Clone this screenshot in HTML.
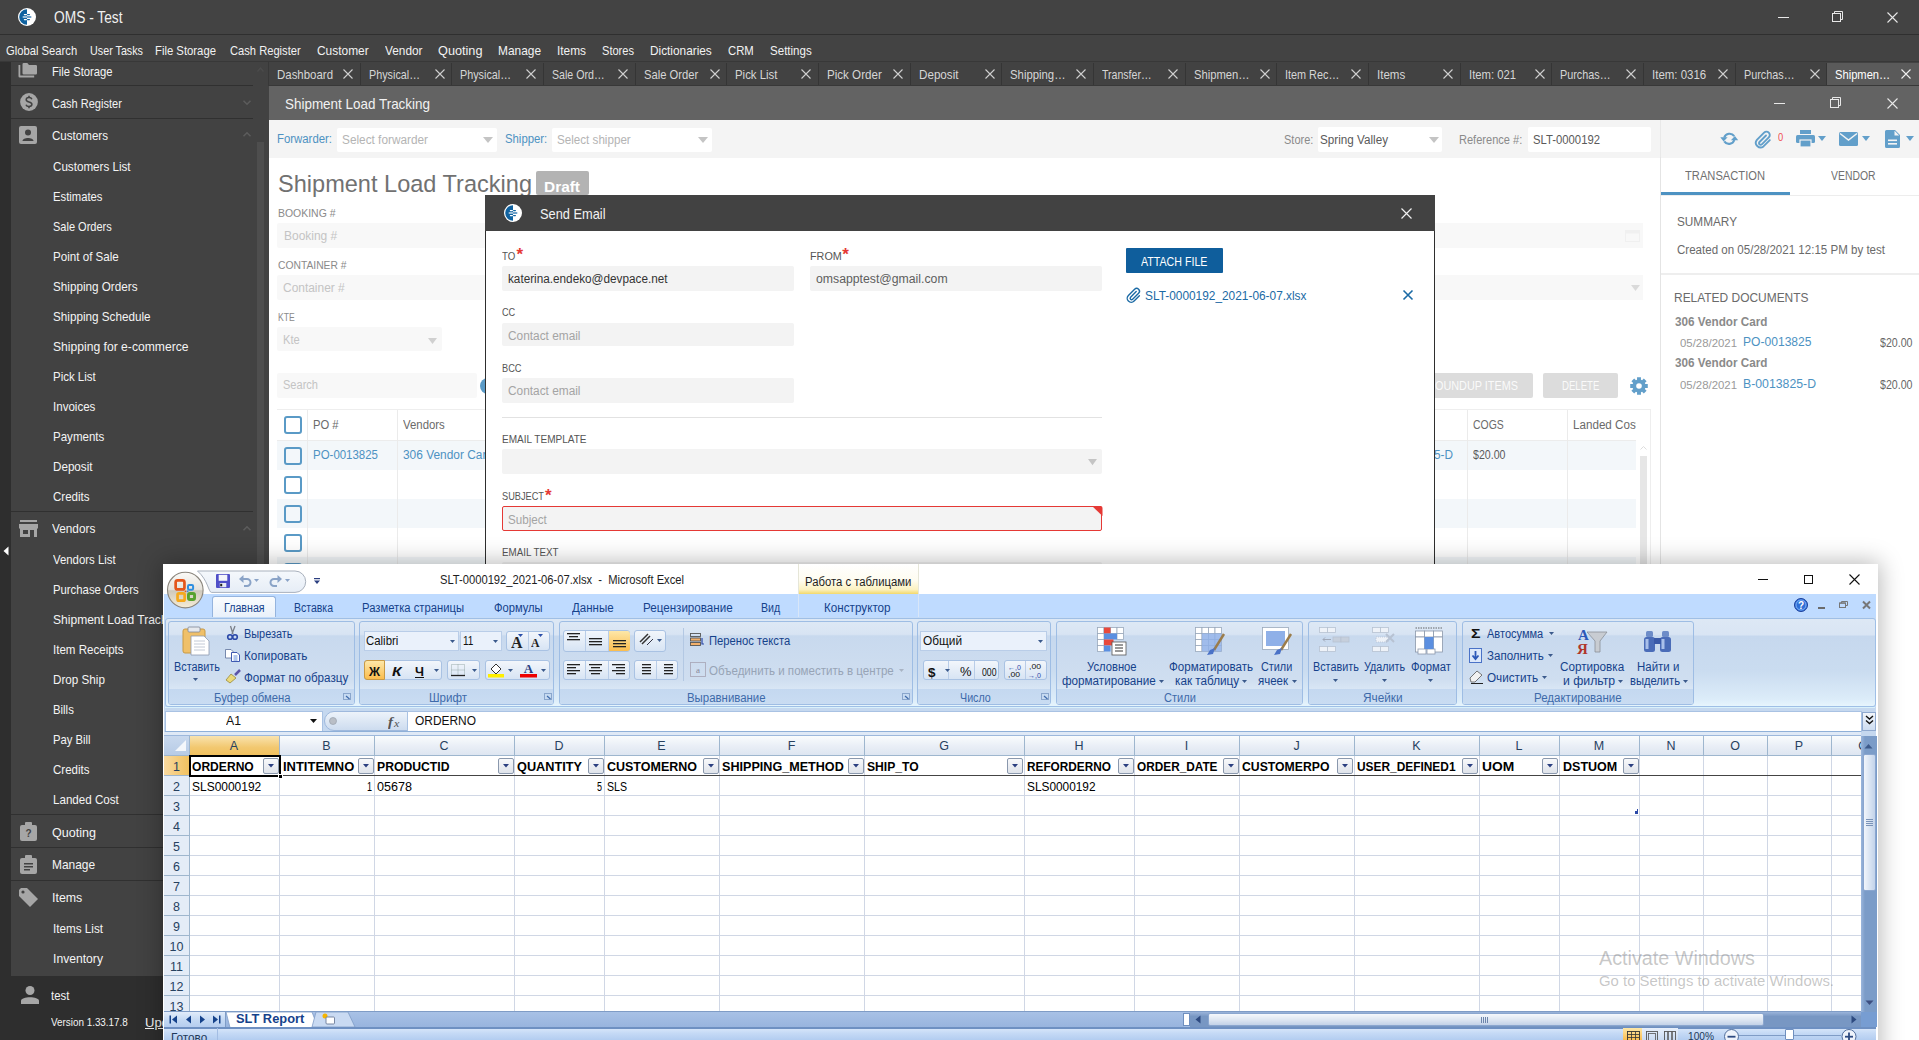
<!DOCTYPE html>
<html><head><meta charset="utf-8"><style>
*{margin:0;padding:0;box-sizing:border-box}
html,body{width:1919px;height:1040px;overflow:hidden;background:#434343;font-family:"Liberation Sans",sans-serif;position:relative}
.a{position:absolute}
.t{position:absolute;white-space:nowrap}
svg{position:absolute;overflow:visible}
</style></head><body>
<div class="a" style="left:0px;top:0px;width:1919px;height:34px;background:#434343;"></div>
<div class="a" style="left:0px;top:34px;width:1919px;height:1px;background:#2f2f2f;"></div>
<div class="a" style="left:0px;top:35px;width:1919px;height:27px;background:#434343;"></div>
<svg style="left:17px;top:7px;" width="20" height="20" viewBox="0 0 20 20"><circle cx="10" cy="10" r="9" fill="#fff"/><path d="M10 2.2 A7.8 7.8 0 0 0 10 17.8 Z" fill="#0f62a0"/><rect x="6.8" y="6.9" width="3.2" height="1.3" rx="0.6" fill="#fff"/><rect x="10" y="6.9" width="3" height="1.3" rx="0.6" fill="#0f62a0"/><rect x="5.7" y="9.25" width="4.3" height="1.5" fill="#c9dbe9"/><rect x="10" y="9.25" width="4.3" height="1.5" fill="#3f82b8"/><rect x="6.8" y="11.9" width="3.2" height="1.3" rx="0.6" fill="#fff"/><rect x="10" y="11.9" width="3" height="1.3" rx="0.6" fill="#0f62a0"/></svg>
<div class="t" style="left:54px;top:10.0px;font-size:16px;line-height:16px;color:#f0f0f0;font-weight:normal;transform:scaleX(0.8593);transform-origin:0 0;">OMS - Test</div>
<div class="a" style="left:1778px;top:17px;width:11px;height:1px;background:#e8e8e8;"></div>
<svg style="left:1832px;top:11px;" width="12" height="12" viewBox="0 0 12 12"><rect x="0.5" y="2.5" width="8" height="8" fill="none" stroke="#e8e8e8" stroke-width="1"/><path d="M2.5 2.5V0.5H10.5V8.5H8.5" fill="none" stroke="#e8e8e8" stroke-width="1"/></svg>
<svg style="left:1887px;top:12px;" width="11" height="11" viewBox="0 0 11 11"><path d="M0.5 0.5L10.5 10.5M10.5 0.5L0.5 10.5" stroke="#e8e8e8" stroke-width="1.1"/></svg>
<div class="t" style="left:6.25px;top:44.1px;font-size:13.5px;line-height:13.5px;color:#f2f2f2;font-weight:normal;transform:scaleX(0.8323);transform-origin:0 0;">Global Search</div>
<div class="t" style="left:90px;top:44.1px;font-size:13.5px;line-height:13.5px;color:#f2f2f2;font-weight:normal;transform:scaleX(0.7968);transform-origin:0 0;">User Tasks</div>
<div class="t" style="left:155px;top:44.1px;font-size:13.5px;line-height:13.5px;color:#f2f2f2;font-weight:normal;transform:scaleX(0.8380);transform-origin:0 0;">File Storage</div>
<div class="t" style="left:230px;top:44.1px;font-size:13.5px;line-height:13.5px;color:#f2f2f2;font-weight:normal;transform:scaleX(0.8265);transform-origin:0 0;">Cash Register</div>
<div class="t" style="left:317px;top:44.1px;font-size:13.5px;line-height:13.5px;color:#f2f2f2;font-weight:normal;transform:scaleX(0.8835);transform-origin:0 0;">Customer</div>
<div class="t" style="left:384.5px;top:44.1px;font-size:13.5px;line-height:13.5px;color:#f2f2f2;font-weight:normal;transform:scaleX(0.8764);transform-origin:0 0;">Vendor</div>
<div class="t" style="left:437.5px;top:44.1px;font-size:13.5px;line-height:13.5px;color:#f2f2f2;font-weight:normal;transform:scaleX(0.9411);transform-origin:0 0;">Quoting</div>
<div class="t" style="left:498px;top:44.1px;font-size:13.5px;line-height:13.5px;color:#f2f2f2;font-weight:normal;transform:scaleX(0.8814);transform-origin:0 0;">Manage</div>
<div class="t" style="left:556.75px;top:44.1px;font-size:13.5px;line-height:13.5px;color:#f2f2f2;font-weight:normal;transform:scaleX(0.8786);transform-origin:0 0;">Items</div>
<div class="t" style="left:601.75px;top:44.1px;font-size:13.5px;line-height:13.5px;color:#f2f2f2;font-weight:normal;transform:scaleX(0.8201);transform-origin:0 0;">Stores</div>
<div class="t" style="left:650px;top:44.1px;font-size:13.5px;line-height:13.5px;color:#f2f2f2;font-weight:normal;transform:scaleX(0.8755);transform-origin:0 0;">Dictionaries</div>
<div class="t" style="left:728px;top:44.1px;font-size:13.5px;line-height:13.5px;color:#f2f2f2;font-weight:normal;transform:scaleX(0.8375);transform-origin:0 0;">CRM</div>
<div class="t" style="left:770px;top:44.1px;font-size:13.5px;line-height:13.5px;color:#f2f2f2;font-weight:normal;transform:scaleX(0.8559);transform-origin:0 0;">Settings</div>
<div class="a" style="left:0px;top:62px;width:11px;height:978px;background:#2e2e2e;"></div>
<div class="a" style="left:11px;top:62px;width:258px;height:914px;background:#424242;"></div>
<div class="a" style="left:0px;top:976px;width:269px;height:64px;background:#2e2e2e;"></div>
<div class="a" style="left:257px;top:142px;width:7px;height:834px;background:#4e4e4e;"></div>
<svg style="left:3px;top:546px;" width="6" height="10" viewBox="0 0 6 10"><path d="M5.5 0.5V9.5L0.5 5Z" fill="#fff"/></svg>
<div class="a" style="left:11px;top:85px;width:242px;height:1px;background:#303030;"></div>
<div class="a" style="left:11px;top:118px;width:242px;height:1px;background:#303030;"></div>
<div class="a" style="left:11px;top:511px;width:242px;height:1px;background:#303030;"></div>
<div class="a" style="left:11px;top:814px;width:242px;height:1px;background:#303030;"></div>
<div class="a" style="left:11px;top:847px;width:242px;height:1px;background:#303030;"></div>
<div class="a" style="left:11px;top:880px;width:242px;height:1px;background:#303030;"></div>
<div class="t" style="left:52px;top:65.0px;font-size:13px;line-height:13px;color:#f4f4f4;font-weight:normal;transform:scaleX(0.8631);transform-origin:0 0;">File Storage</div>
<div class="t" style="left:52px;top:96.6px;font-size:13px;line-height:13px;color:#f4f4f4;font-weight:normal;transform:scaleX(0.8474);transform-origin:0 0;">Cash Register</div>
<div class="t" style="left:52px;top:129.4px;font-size:13px;line-height:13px;color:#f4f4f4;font-weight:normal;transform:scaleX(0.8910);transform-origin:0 0;">Customers</div>
<div class="t" style="left:52px;top:522.0px;font-size:13px;line-height:13px;color:#f4f4f4;font-weight:normal;transform:scaleX(0.9077);transform-origin:0 0;">Vendors</div>
<div class="t" style="left:52px;top:825.5px;font-size:13px;line-height:13px;color:#f4f4f4;font-weight:normal;transform:scaleX(0.9641);transform-origin:0 0;">Quoting</div>
<div class="t" style="left:52px;top:858.2px;font-size:13px;line-height:13px;color:#f4f4f4;font-weight:normal;transform:scaleX(0.9174);transform-origin:0 0;">Manage</div>
<div class="t" style="left:52px;top:890.7px;font-size:13px;line-height:13px;color:#f4f4f4;font-weight:normal;transform:scaleX(0.9533);transform-origin:0 0;">Items</div>
<div class="t" style="left:53.3px;top:160.0px;font-size:13px;line-height:13px;color:#f4f4f4;font-weight:normal;transform:scaleX(0.8951);transform-origin:0 0;">Customers List</div>
<div class="t" style="left:53.3px;top:190.0px;font-size:13px;line-height:13px;color:#f4f4f4;font-weight:normal;transform:scaleX(0.8673);transform-origin:0 0;">Estimates</div>
<div class="t" style="left:53.3px;top:220.0px;font-size:13px;line-height:13px;color:#f4f4f4;font-weight:normal;transform:scaleX(0.8463);transform-origin:0 0;">Sale Orders</div>
<div class="t" style="left:53.3px;top:250.0px;font-size:13px;line-height:13px;color:#f4f4f4;font-weight:normal;transform:scaleX(0.8926);transform-origin:0 0;">Point of Sale</div>
<div class="t" style="left:53.3px;top:280.0px;font-size:13px;line-height:13px;color:#f4f4f4;font-weight:normal;transform:scaleX(0.8995);transform-origin:0 0;">Shipping Orders</div>
<div class="t" style="left:53.3px;top:310.0px;font-size:13px;line-height:13px;color:#f4f4f4;font-weight:normal;transform:scaleX(0.8993);transform-origin:0 0;">Shipping Schedule</div>
<div class="t" style="left:53.3px;top:340.0px;font-size:13px;line-height:13px;color:#f4f4f4;font-weight:normal;transform:scaleX(0.9330);transform-origin:0 0;">Shipping for e-commerce</div>
<div class="t" style="left:53.3px;top:370.0px;font-size:13px;line-height:13px;color:#f4f4f4;font-weight:normal;transform:scaleX(0.8822);transform-origin:0 0;">Pick List</div>
<div class="t" style="left:53.3px;top:400.0px;font-size:13px;line-height:13px;color:#f4f4f4;font-weight:normal;transform:scaleX(0.8891);transform-origin:0 0;">Invoices</div>
<div class="t" style="left:53.3px;top:430.0px;font-size:13px;line-height:13px;color:#f4f4f4;font-weight:normal;transform:scaleX(0.8875);transform-origin:0 0;">Payments</div>
<div class="t" style="left:53.3px;top:460.0px;font-size:13px;line-height:13px;color:#f4f4f4;font-weight:normal;transform:scaleX(0.8961);transform-origin:0 0;">Deposit</div>
<div class="t" style="left:53.3px;top:490.0px;font-size:13px;line-height:13px;color:#f4f4f4;font-weight:normal;transform:scaleX(0.8888);transform-origin:0 0;">Credits</div>
<div class="t" style="left:53.3px;top:553.0px;font-size:13px;line-height:13px;color:#f4f4f4;font-weight:normal;transform:scaleX(0.8750);transform-origin:0 0;">Vendors List</div>
<div class="t" style="left:53.3px;top:583.0px;font-size:13px;line-height:13px;color:#f4f4f4;font-weight:normal;transform:scaleX(0.8711);transform-origin:0 0;">Purchase Orders</div>
<div class="t" style="left:53.3px;top:613.0px;font-size:13px;line-height:13px;color:#f4f4f4;font-weight:normal;transform:scaleX(0.9273);transform-origin:0 0;">Shipment Load Tracking</div>
<div class="t" style="left:53.3px;top:643.0px;font-size:13px;line-height:13px;color:#f4f4f4;font-weight:normal;transform:scaleX(0.8883);transform-origin:0 0;">Item Receipts</div>
<div class="t" style="left:53.3px;top:673.0px;font-size:13px;line-height:13px;color:#f4f4f4;font-weight:normal;transform:scaleX(0.8978);transform-origin:0 0;">Drop Ship</div>
<div class="t" style="left:53.3px;top:703.0px;font-size:13px;line-height:13px;color:#f4f4f4;font-weight:normal;transform:scaleX(0.8726);transform-origin:0 0;">Bills</div>
<div class="t" style="left:53.3px;top:733.0px;font-size:13px;line-height:13px;color:#f4f4f4;font-weight:normal;transform:scaleX(0.8674);transform-origin:0 0;">Pay Bill</div>
<div class="t" style="left:53.3px;top:763.0px;font-size:13px;line-height:13px;color:#f4f4f4;font-weight:normal;transform:scaleX(0.8864);transform-origin:0 0;">Credits</div>
<div class="t" style="left:53.3px;top:793.0px;font-size:13px;line-height:13px;color:#f4f4f4;font-weight:normal;transform:scaleX(0.8925);transform-origin:0 0;">Landed Cost</div>
<div class="t" style="left:53px;top:921.7px;font-size:13px;line-height:13px;color:#f4f4f4;font-weight:normal;transform:scaleX(0.8989);transform-origin:0 0;">Items List</div>
<div class="t" style="left:53px;top:951.7px;font-size:13px;line-height:13px;color:#f4f4f4;font-weight:normal;transform:scaleX(0.9350);transform-origin:0 0;">Inventory</div>
<div class="t" style="left:51.2px;top:988.7px;font-size:13px;line-height:13px;color:#f4f4f4;font-weight:normal;transform:scaleX(0.8734);transform-origin:0 0;">test</div>
<div class="t" style="left:51.2px;top:1016.8px;font-size:11.5px;line-height:11.5px;color:#f4f4f4;font-weight:normal;transform:scaleX(0.8580);transform-origin:0 0;">Version 1.33.17.8</div>
<div class="t" style="left:145px;top:1015.5px;font-size:13px;line-height:13px;color:#f4f4f4;font-weight:normal;text-decoration:underline;">Update</div>
<svg style="left:18px;top:63px;" width="19" height="15" viewBox="0 0 19 15"><path d="M4.5 1.2A1.2 1.2 0 0 1 5.7 0H9.3L11 1.9H17.8A1.2 1.2 0 0 1 19 3.1V10.2A1.2 1.2 0 0 1 17.8 11.4H5.7A1.2 1.2 0 0 1 4.5 10.2Z" fill="#a6a6a6"/><path d="M0.5 2H2.3V12.4H16.2V14.5H1.7A1.2 1.2 0 0 1 0.5 13.3Z" fill="#a6a6a6"/></svg>
<svg style="left:19.5px;top:93px;" width="18" height="18" viewBox="0 0 18 18"><circle cx="9" cy="9" r="8.9" fill="#a6a6a6"/><path d="M11.9 6.3C11.5 5.2 10.5 4.6 9 4.6C7.3 4.6 6.2 5.5 6.2 6.8C6.2 9.7 11.9 8.3 11.9 11.3C11.9 12.6 10.8 13.4 9 13.4C7.5 13.4 6.4 12.8 6 11.7" fill="none" stroke="#424242" stroke-width="1.5"/><path d="M9 2.8V4.8M9 13.2V15.2" stroke="#424242" stroke-width="1.5"/></svg>
<svg style="left:19px;top:126px;" width="18" height="18" viewBox="0 0 18 18"><rect x="0" y="0" width="18" height="18" rx="2" fill="#a6a6a6"/><circle cx="9" cy="6.5" r="3" fill="#424242"/><path d="M3.5 15C3.5 11 14.5 11 14.5 15Z" fill="#424242"/></svg>
<svg style="left:19px;top:520px;" width="19" height="17" viewBox="0 0 19 17"><rect x="1" y="0" width="17" height="2" fill="#a6a6a6"/><path d="M0 4H19V8.5H0Z" fill="#a6a6a6"/><path d="M1 8H18V17H15V10H11V17H1Z" fill="#a6a6a6"/><rect x="4" y="10" width="5" height="4" fill="#424242"/></svg>
<svg style="left:20px;top:822px;" width="17" height="19" viewBox="0 0 17 19"><rect x="0" y="3" width="17" height="16" rx="2" fill="#a6a6a6"/><rect x="5" y="0" width="7" height="5" rx="1" fill="#a6a6a6"/><text x="8.5" y="15" font-size="10" font-weight="bold" text-anchor="middle" fill="#424242" font-family="Liberation Sans">?</text></svg>
<svg style="left:20px;top:855px;" width="17" height="19" viewBox="0 0 17 19"><rect x="0" y="3" width="17" height="16" rx="2" fill="#a6a6a6"/><rect x="5" y="0" width="7" height="5" rx="1" fill="#a6a6a6"/><rect x="4" y="8" width="9" height="1.5" fill="#424242"/><rect x="4" y="11" width="9" height="1.5" fill="#424242"/><rect x="4" y="14" width="6" height="1.5" fill="#424242"/></svg>
<svg style="left:19px;top:888px;" width="19" height="19" viewBox="0 0 19 19"><path d="M0 2V8L11 19L19 11L8 0H2Z" fill="#a6a6a6"/><circle cx="4" cy="4" r="1.6" fill="#424242"/></svg>
<svg style="left:21px;top:986px;" width="18" height="18" viewBox="0 0 18 18"><circle cx="9" cy="4.5" r="4.5" fill="#a6a6a6"/><path d="M0 18V15C0 10 18 10 18 15V18Z" fill="#a6a6a6"/></svg>
<svg style="left:257px;top:67px;" width="7" height="5" viewBox="0 0 7 5"><path d="M0.5 4.5L3.5 1L6.5 4.5" fill="none" stroke="#4c4c4c" stroke-width="1.3"/></svg>
<svg style="left:243px;top:100px;" width="8" height="5" viewBox="0 0 8 5"><path d="M0.5 0.8L4 4.3L7.5 0.8" fill="none" stroke="#5c5c5c" stroke-width="1.5"/></svg>
<svg style="left:243px;top:132px;" width="8" height="5" viewBox="0 0 8 5"><path d="M0.5 4.3L4 0.8L7.5 4.3" fill="none" stroke="#5c5c5c" stroke-width="1.5"/></svg>
<svg style="left:243px;top:526px;" width="8" height="5" viewBox="0 0 8 5"><path d="M0.5 4.3L4 0.8L7.5 4.3" fill="none" stroke="#5c5c5c" stroke-width="1.5"/></svg>
<div class="a" style="left:269px;top:62px;width:1650px;height:24px;background:#424242;"></div>
<div class="a" style="left:0px;top:61px;width:1919px;height:1px;background:#383838;"></div>
<div class="a" style="left:268px;top:62px;width:1px;height:24px;background:#383838;"></div>
<div class="a" style="left:269px;top:85px;width:1650px;height:1px;background:#383838;"></div>
<div class="a" style="left:360px;top:63px;width:1px;height:22px;background:#353535;"></div>
<div class="t" style="left:277.0px;top:67.7px;font-size:13.5px;line-height:13.5px;color:#d6d6d6;font-weight:normal;transform:scaleX(0.8479);transform-origin:0 0;">Dashboard</div>
<svg style="left:343.0px;top:69px;" width="10" height="10" viewBox="0 0 10 10"><path d="M0.5 0.5L9.5 9.5M9.5 0.5L0.5 9.5" stroke="#d0d0d0" stroke-width="1.1"/></svg>
<div class="a" style="left:451px;top:63px;width:1px;height:22px;background:#353535;"></div>
<div class="t" style="left:368.67px;top:67.7px;font-size:13.5px;line-height:13.5px;color:#d6d6d6;font-weight:normal;transform:scaleX(0.7997);transform-origin:0 0;">Physical&hellip;</div>
<svg style="left:434.7px;top:69px;" width="10" height="10" viewBox="0 0 10 10"><path d="M0.5 0.5L9.5 9.5M9.5 0.5L0.5 9.5" stroke="#d0d0d0" stroke-width="1.1"/></svg>
<div class="a" style="left:543px;top:63px;width:1px;height:22px;background:#353535;"></div>
<div class="t" style="left:460.34px;top:67.7px;font-size:13.5px;line-height:13.5px;color:#d6d6d6;font-weight:normal;transform:scaleX(0.7997);transform-origin:0 0;">Physical&hellip;</div>
<svg style="left:526.3px;top:69px;" width="10" height="10" viewBox="0 0 10 10"><path d="M0.5 0.5L9.5 9.5M9.5 0.5L0.5 9.5" stroke="#d0d0d0" stroke-width="1.1"/></svg>
<div class="a" style="left:635px;top:63px;width:1px;height:22px;background:#353535;"></div>
<div class="t" style="left:552.01px;top:67.7px;font-size:13.5px;line-height:13.5px;color:#d6d6d6;font-weight:normal;transform:scaleX(0.7862);transform-origin:0 0;">Sale Ord&hellip;</div>
<svg style="left:618.0px;top:69px;" width="10" height="10" viewBox="0 0 10 10"><path d="M0.5 0.5L9.5 9.5M9.5 0.5L0.5 9.5" stroke="#d0d0d0" stroke-width="1.1"/></svg>
<div class="a" style="left:726px;top:63px;width:1px;height:22px;background:#353535;"></div>
<div class="t" style="left:643.68px;top:67.7px;font-size:13.5px;line-height:13.5px;color:#d6d6d6;font-weight:normal;transform:scaleX(0.8310);transform-origin:0 0;">Sale Order</div>
<svg style="left:709.7px;top:69px;" width="10" height="10" viewBox="0 0 10 10"><path d="M0.5 0.5L9.5 9.5M9.5 0.5L0.5 9.5" stroke="#d0d0d0" stroke-width="1.1"/></svg>
<div class="a" style="left:818px;top:63px;width:1px;height:22px;background:#353535;"></div>
<div class="t" style="left:735.35px;top:67.7px;font-size:13.5px;line-height:13.5px;color:#d6d6d6;font-weight:normal;transform:scaleX(0.8455);transform-origin:0 0;">Pick List</div>
<svg style="left:801.4px;top:69px;" width="10" height="10" viewBox="0 0 10 10"><path d="M0.5 0.5L9.5 9.5M9.5 0.5L0.5 9.5" stroke="#d0d0d0" stroke-width="1.1"/></svg>
<div class="a" style="left:910px;top:63px;width:1px;height:22px;background:#353535;"></div>
<div class="t" style="left:827.02px;top:67.7px;font-size:13.5px;line-height:13.5px;color:#d6d6d6;font-weight:normal;transform:scaleX(0.8586);transform-origin:0 0;">Pick Order</div>
<svg style="left:893.0px;top:69px;" width="10" height="10" viewBox="0 0 10 10"><path d="M0.5 0.5L9.5 9.5M9.5 0.5L0.5 9.5" stroke="#d0d0d0" stroke-width="1.1"/></svg>
<div class="a" style="left:1001px;top:63px;width:1px;height:22px;background:#353535;"></div>
<div class="t" style="left:918.69px;top:67.7px;font-size:13.5px;line-height:13.5px;color:#d6d6d6;font-weight:normal;transform:scaleX(0.8629);transform-origin:0 0;">Deposit</div>
<svg style="left:984.7px;top:69px;" width="10" height="10" viewBox="0 0 10 10"><path d="M0.5 0.5L9.5 9.5M9.5 0.5L0.5 9.5" stroke="#d0d0d0" stroke-width="1.1"/></svg>
<div class="a" style="left:1093px;top:63px;width:1px;height:22px;background:#353535;"></div>
<div class="t" style="left:1010.36px;top:67.7px;font-size:13.5px;line-height:13.5px;color:#d6d6d6;font-weight:normal;transform:scaleX(0.8403);transform-origin:0 0;">Shipping&hellip;</div>
<svg style="left:1076.4px;top:69px;" width="10" height="10" viewBox="0 0 10 10"><path d="M0.5 0.5L9.5 9.5M9.5 0.5L0.5 9.5" stroke="#d0d0d0" stroke-width="1.1"/></svg>
<div class="a" style="left:1185px;top:63px;width:1px;height:22px;background:#353535;"></div>
<div class="t" style="left:1102.03px;top:67.7px;font-size:13.5px;line-height:13.5px;color:#d6d6d6;font-weight:normal;transform:scaleX(0.7824);transform-origin:0 0;">Transfer&hellip;</div>
<svg style="left:1168.0px;top:69px;" width="10" height="10" viewBox="0 0 10 10"><path d="M0.5 0.5L9.5 9.5M9.5 0.5L0.5 9.5" stroke="#d0d0d0" stroke-width="1.1"/></svg>
<div class="a" style="left:1276px;top:63px;width:1px;height:22px;background:#353535;"></div>
<div class="t" style="left:1193.7px;top:67.7px;font-size:13.5px;line-height:13.5px;color:#d6d6d6;font-weight:normal;transform:scaleX(0.8310);transform-origin:0 0;">Shipmen&hellip;</div>
<svg style="left:1259.7px;top:69px;" width="10" height="10" viewBox="0 0 10 10"><path d="M0.5 0.5L9.5 9.5M9.5 0.5L0.5 9.5" stroke="#d0d0d0" stroke-width="1.1"/></svg>
<div class="a" style="left:1368px;top:63px;width:1px;height:22px;background:#353535;"></div>
<div class="t" style="left:1285.37px;top:67.7px;font-size:13.5px;line-height:13.5px;color:#d6d6d6;font-weight:normal;transform:scaleX(0.8035);transform-origin:0 0;">Item Rec&hellip;</div>
<svg style="left:1351.4px;top:69px;" width="10" height="10" viewBox="0 0 10 10"><path d="M0.5 0.5L9.5 9.5M9.5 0.5L0.5 9.5" stroke="#d0d0d0" stroke-width="1.1"/></svg>
<div class="a" style="left:1460px;top:63px;width:1px;height:22px;background:#353535;"></div>
<div class="t" style="left:1377.04px;top:67.7px;font-size:13.5px;line-height:13.5px;color:#d6d6d6;font-weight:normal;transform:scaleX(0.8559);transform-origin:0 0;">Items</div>
<svg style="left:1443.0px;top:69px;" width="10" height="10" viewBox="0 0 10 10"><path d="M0.5 0.5L9.5 9.5M9.5 0.5L0.5 9.5" stroke="#d0d0d0" stroke-width="1.1"/></svg>
<div class="a" style="left:1551px;top:63px;width:1px;height:22px;background:#353535;"></div>
<div class="t" style="left:1468.71px;top:67.7px;font-size:13.5px;line-height:13.5px;color:#d6d6d6;font-weight:normal;transform:scaleX(0.8351);transform-origin:0 0;">Item: 021</div>
<svg style="left:1534.7px;top:69px;" width="10" height="10" viewBox="0 0 10 10"><path d="M0.5 0.5L9.5 9.5M9.5 0.5L0.5 9.5" stroke="#d0d0d0" stroke-width="1.1"/></svg>
<div class="a" style="left:1643px;top:63px;width:1px;height:22px;background:#353535;"></div>
<div class="t" style="left:1560.38px;top:67.7px;font-size:13.5px;line-height:13.5px;color:#d6d6d6;font-weight:normal;transform:scaleX(0.8013);transform-origin:0 0;">Purchas&hellip;</div>
<svg style="left:1626.4px;top:69px;" width="10" height="10" viewBox="0 0 10 10"><path d="M0.5 0.5L9.5 9.5M9.5 0.5L0.5 9.5" stroke="#d0d0d0" stroke-width="1.1"/></svg>
<div class="a" style="left:1735px;top:63px;width:1px;height:22px;background:#353535;"></div>
<div class="t" style="left:1652.05px;top:67.7px;font-size:13.5px;line-height:13.5px;color:#d6d6d6;font-weight:normal;transform:scaleX(0.8505);transform-origin:0 0;">Item: 0316</div>
<svg style="left:1718.0px;top:69px;" width="10" height="10" viewBox="0 0 10 10"><path d="M0.5 0.5L9.5 9.5M9.5 0.5L0.5 9.5" stroke="#d0d0d0" stroke-width="1.1"/></svg>
<div class="a" style="left:1826px;top:63px;width:1px;height:22px;background:#353535;"></div>
<div class="t" style="left:1743.72px;top:67.7px;font-size:13.5px;line-height:13.5px;color:#d6d6d6;font-weight:normal;transform:scaleX(0.8013);transform-origin:0 0;">Purchas&hellip;</div>
<svg style="left:1809.7px;top:69px;" width="10" height="10" viewBox="0 0 10 10"><path d="M0.5 0.5L9.5 9.5M9.5 0.5L0.5 9.5" stroke="#d0d0d0" stroke-width="1.1"/></svg>
<div class="a" style="left:1827px;top:63px;width:92px;height:22px;background:#5a5a5a;"></div>
<div class="t" style="left:1835.39px;top:67.7px;font-size:13.5px;line-height:13.5px;color:#ffffff;font-weight:normal;transform:scaleX(0.8273);transform-origin:0 0;">Shipmen&hellip;</div>
<svg style="left:1901.4px;top:69px;" width="10" height="10" viewBox="0 0 10 10"><path d="M0.5 0.5L9.5 9.5M9.5 0.5L0.5 9.5" stroke="#f0f0f0" stroke-width="1.1"/></svg>
<div class="a" style="left:269px;top:86px;width:1650px;height:34px;background:#636363;"></div>
<div class="t" style="left:285.4px;top:96.9px;font-size:14.5px;line-height:14.5px;color:#f2f2f2;font-weight:normal;transform:scaleX(0.9273);transform-origin:0 0;">Shipment Load Tracking</div>
<div class="a" style="left:1774px;top:103px;width:11px;height:1px;background:#e8e8e8;"></div>
<svg style="left:1830px;top:97px;" width="12" height="12" viewBox="0 0 12 12"><rect x="0.5" y="2.5" width="8" height="8" fill="none" stroke="#e8e8e8" stroke-width="1"/><path d="M2.5 2.5V0.5H10.5V8.5H8.5" fill="none" stroke="#e8e8e8" stroke-width="1"/></svg>
<svg style="left:1887px;top:98px;" width="11" height="11" viewBox="0 0 11 11"><path d="M0.5 0.5L10.5 10.5M10.5 0.5L0.5 10.5" stroke="#e8e8e8" stroke-width="1.1"/></svg>
<div class="a" style="left:269px;top:120px;width:1650px;height:920px;background:#ffffff;"></div>
<div class="a" style="left:269px;top:120px;width:1650px;height:37.5px;background:#f4f4f4;"></div>
<div class="t" style="left:277.3px;top:133.1px;font-size:12px;line-height:12px;color:#4d92c2;font-weight:normal;transform:scaleX(0.9480);transform-origin:0 0;">Forwarder:</div>
<div class="a" style="left:336.75px;top:127.5px;width:160px;height:24.25px;background:#fff;border-radius:2px"></div>
<div class="t" style="left:342px;top:134.1px;font-size:12px;line-height:12px;color:#b4b4b4;font-weight:normal;transform:scaleX(0.9843);transform-origin:0 0;">Select forwarder</div>
<svg style="left:483px;top:137px;" width="10" height="6" viewBox="0 0 10 6"><path d="M0 0H10L5 6Z" fill="#c4c4c4"/></svg>
<div class="t" style="left:505px;top:133.1px;font-size:12px;line-height:12px;color:#4d92c2;font-weight:normal;transform:scaleX(0.9452);transform-origin:0 0;">Shipper:</div>
<div class="a" style="left:551.75px;top:127.5px;width:160px;height:24.25px;background:#fff;border-radius:2px"></div>
<div class="t" style="left:556.75px;top:134.1px;font-size:12px;line-height:12px;color:#b4b4b4;font-weight:normal;transform:scaleX(0.9698);transform-origin:0 0;">Select shipper</div>
<svg style="left:698px;top:137px;" width="10" height="6" viewBox="0 0 10 6"><path d="M0 0H10L5 6Z" fill="#c4c4c4"/></svg>
<div class="t" style="left:1284.2px;top:133.8px;font-size:12px;line-height:12px;color:#8a8a8a;font-weight:normal;transform:scaleX(0.9152);transform-origin:0 0;">Store:</div>
<div class="a" style="left:1318.3px;top:127.3px;width:124px;height:24.4px;background:#fff;border-radius:2px"></div>
<div class="t" style="left:1320px;top:133.9px;font-size:12.5px;line-height:12.5px;color:#5a5a5a;font-weight:normal;transform:scaleX(0.9350);transform-origin:0 0;">Spring Valley</div>
<svg style="left:1429px;top:137px;" width="10" height="6" viewBox="0 0 10 6"><path d="M0 0H10L5 6Z" fill="#c4c4c4"/></svg>
<div class="t" style="left:1459px;top:133.8px;font-size:12px;line-height:12px;color:#8a8a8a;font-weight:normal;transform:scaleX(0.9198);transform-origin:0 0;">Reference #:</div>
<div class="a" style="left:1528px;top:126.5px;width:122.6px;height:25.2px;background:#fff;border-radius:2px"></div>
<div class="t" style="left:1533px;top:133.9px;font-size:12.5px;line-height:12.5px;color:#5a5a5a;font-weight:normal;transform:scaleX(0.9037);transform-origin:0 0;">SLT-0000192</div>
<div class="a" style="left:1660px;top:157px;width:1px;height:413px;background:#e4e4e4;"></div>
<div class="a" style="left:1660px;top:120px;width:1px;height:37px;background:#e8e8e8;"></div>
<svg style="left:1720px;top:131px;" width="19" height="16" viewBox="0 0 19 16"><path d="M14.2 5.2A5.6 5.6 0 0 0 4.2 6.6" fill="none" stroke="#629fca" stroke-width="2.1"/><path d="M0.3 6.3L7.6 6.3L3.6 10.6Z" fill="#629fca"/><path d="M4.3 10.4A5.6 5.6 0 0 0 14.3 9" fill="none" stroke="#629fca" stroke-width="2.1"/><path d="M18.2 9.3L10.9 9.3L14.9 5Z" fill="#629fca"/></svg>
<svg style="left:1754px;top:130px;" width="18" height="18" viewBox="0 0 18 18"><path d="M12 5.5L5.5 12A1.6 1.6 0 0 0 7.8 14.3L14.8 7.3A3.3 3.3 0 0 0 10.1 2.6L2.9 9.8A4.7 4.7 0 0 0 9.5 16.4L15.8 10.1" fill="none" stroke="#629fca" stroke-width="1.9" stroke-linecap="round"/></svg>
<div class="t" style="left:1777.5px;top:132.5px;font-size:10px;line-height:10px;color:#f05050;font-weight:normal;transform:scaleX(0.9350);transform-origin:0 0;">0</div>
<svg style="left:1796px;top:130px;" width="19" height="17" viewBox="0 0 19 17"><rect x="4" y="0" width="11" height="4" fill="#629fca"/><rect x="0" y="5" width="19" height="8" rx="1.5" fill="#629fca"/><rect x="4" y="10" width="11" height="7" fill="#629fca" stroke="#f4f4f4" stroke-width="1.2"/></svg>
<svg style="left:1818px;top:136px;" width="8" height="5" viewBox="0 0 8 5"><path d="M0 0H8L4 5Z" fill="#629fca"/></svg>
<svg style="left:1839px;top:132px;" width="19" height="14" viewBox="0 0 19 14"><rect x="0" y="0" width="19" height="14" rx="1.5" fill="#629fca"/><path d="M1 1.5L9.5 8L18 1.5" fill="none" stroke="#f4f4f4" stroke-width="1.5"/></svg>
<svg style="left:1862px;top:136px;" width="8" height="5" viewBox="0 0 8 5"><path d="M0 0H8L4 5Z" fill="#629fca"/></svg>
<svg style="left:1885px;top:130px;" width="15" height="18" viewBox="0 0 15 18"><path d="M0 1.5A1.5 1.5 0 0 1 1.5 0H10L15 5V16.5A1.5 1.5 0 0 1 13.5 18H1.5A1.5 1.5 0 0 1 0 16.5Z" fill="#629fca"/><path d="M9.5 0.8V5.5H14.2Z" fill="#f4f4f4"/><rect x="3" y="9.5" width="9" height="1.6" fill="#f4f4f4"/><rect x="3" y="13" width="9" height="1.6" fill="#f4f4f4"/></svg>
<svg style="left:1906px;top:136px;" width="8" height="5" viewBox="0 0 8 5"><path d="M0 0H8L4 5Z" fill="#629fca"/></svg>
<div class="t" style="left:1685px;top:170.4px;font-size:12.5px;line-height:12.5px;color:#707070;font-weight:normal;transform:scaleX(0.8930);transform-origin:0 0;">TRANSACTION</div>
<div class="t" style="left:1831px;top:170.4px;font-size:12.5px;line-height:12.5px;color:#707070;font-weight:normal;transform:scaleX(0.8321);transform-origin:0 0;">VENDOR</div>
<div class="a" style="left:1661px;top:195px;width:258px;height:1px;background:#ededed;"></div>
<div class="a" style="left:1661px;top:192px;width:129px;height:3px;background:#4d92c2;"></div>
<div class="t" style="left:1677px;top:215.0px;font-size:13px;line-height:13px;color:#6a6a6a;font-weight:normal;transform:scaleX(0.9061);transform-origin:0 0;">SUMMARY</div>
<div class="t" style="left:1677px;top:243.8px;font-size:12px;line-height:12px;color:#6a6a6a;font-weight:normal;transform:scaleX(0.9623);transform-origin:0 0;">Created on 05/28/2021 12:15 PM by test</div>
<div class="a" style="left:1661px;top:273px;width:258px;height:2px;background:#eeeeee;"></div>
<div class="t" style="left:1674px;top:291.0px;font-size:13px;line-height:13px;color:#6a6a6a;font-weight:normal;transform:scaleX(0.9188);transform-origin:0 0;">RELATED DOCUMENTS</div>
<div class="t" style="left:1675px;top:315.8px;font-size:12px;line-height:12px;color:#8a8a8a;font-weight:bold;transform:scaleX(0.9767);transform-origin:0 0;">306 Vendor Card</div>
<div class="t" style="left:1680px;top:338.3px;font-size:11px;line-height:11px;color:#9a9a9a;font-weight:normal;transform:scaleX(1.0353);transform-origin:0 0;">05/28/2021</div>
<div class="t" style="left:1743px;top:336.4px;font-size:12.5px;line-height:12.5px;color:#4d92c2;font-weight:normal;transform:scaleX(0.9663);transform-origin:0 0;">PO-0013825</div>
<div class="t" style="left:1880px;top:336.8px;font-size:12px;line-height:12px;color:#666;font-weight:normal;transform:scaleX(0.8855);transform-origin:0 0;">$20.00</div>
<div class="t" style="left:1675px;top:357.3px;font-size:12px;line-height:12px;color:#8a8a8a;font-weight:bold;transform:scaleX(0.9767);transform-origin:0 0;">306 Vendor Card</div>
<div class="t" style="left:1680px;top:380.2px;font-size:11px;line-height:11px;color:#9a9a9a;font-weight:normal;transform:scaleX(1.0353);transform-origin:0 0;">05/28/2021</div>
<div class="t" style="left:1743px;top:378.4px;font-size:12.5px;line-height:12.5px;color:#4d92c2;font-weight:normal;transform:scaleX(0.9818);transform-origin:0 0;">B-0013825-D</div>
<div class="t" style="left:1880px;top:378.8px;font-size:12px;line-height:12px;color:#666;font-weight:normal;transform:scaleX(0.8855);transform-origin:0 0;">$20.00</div>
<div class="t" style="left:277.5px;top:172.1px;font-size:24.5px;line-height:24.5px;color:#717171;font-weight:normal;transform:scaleX(0.9613);transform-origin:0 0;">Shipment Load Tracking</div>
<div class="a" style="left:536px;top:171.25px;width:52.75px;height:24px;background:#b3b3b3;border-radius:2px"></div>
<div class="t" style="left:544.25px;top:179.8px;font-size:14.5px;line-height:14.5px;color:#ffffff;font-weight:bold;transform:scaleX(1.0639);transform-origin:0 0;">Draft</div>
<div class="t" style="left:277.5px;top:208.1px;font-size:11.5px;line-height:11.5px;color:#8a8a8a;font-weight:normal;transform:scaleX(0.9088);transform-origin:0 0;">BOOKING #</div>
<div class="a" style="left:277px;top:223px;width:1366px;height:24.5px;background:#f8f8f8;border-radius:2px"></div>
<div class="t" style="left:283.5px;top:230.2px;font-size:12.5px;line-height:12.5px;color:#c4c4c4;font-weight:normal;transform:scaleX(0.9578);transform-origin:0 0;">Booking #</div>
<div class="t" style="left:277.5px;top:260.1px;font-size:11.5px;line-height:11.5px;color:#8a8a8a;font-weight:normal;transform:scaleX(0.8958);transform-origin:0 0;">CONTAINER #</div>
<div class="a" style="left:277px;top:275px;width:1366px;height:24.5px;background:#f8f8f8;border-radius:2px"></div>
<div class="t" style="left:283px;top:282.2px;font-size:12.5px;line-height:12.5px;color:#c4c4c4;font-weight:normal;transform:scaleX(0.9555);transform-origin:0 0;">Container #</div>
<div class="t" style="left:277.5px;top:312.1px;font-size:11.5px;line-height:11.5px;color:#8a8a8a;font-weight:normal;transform:scaleX(0.7489);transform-origin:0 0;">KTE</div>
<div class="a" style="left:277.25px;top:327px;width:164.5px;height:24.25px;background:#f8f8f8;border-radius:2px"></div>
<div class="t" style="left:283px;top:334.0px;font-size:12.5px;line-height:12.5px;color:#c4c4c4;font-weight:normal;transform:scaleX(0.8927);transform-origin:0 0;">Kte</div>
<svg style="left:428px;top:337.5px;" width="9" height="6" viewBox="0 0 9 6"><path d="M0 0H9L4.5 6Z" fill="#d0d0d0"/></svg>
<div class="a" style="left:1434px;top:275px;width:209px;height:24.5px;background:#f8f8f8;"></div>
<svg style="left:1630.5px;top:285px;" width="9" height="6" viewBox="0 0 9 6"><path d="M0 0H9L4.5 6Z" fill="#dadada"/></svg>
<div class="a" style="left:1434px;top:223px;width:209px;height:24.5px;background:#f8f8f8;"></div>
<svg style="left:1625px;top:229px;" width="15" height="13" viewBox="0 0 15 13"><rect x="0.5" y="1.5" width="14" height="11" fill="none" stroke="#f0f0f0" stroke-width="1"/><rect x="0.5" y="1.5" width="14" height="3" fill="#f0f0f0"/></svg>
<div class="a" style="left:277px;top:373px;width:200px;height:25px;background:#f8f8f8;border-radius:2px"></div>
<div class="t" style="left:283px;top:379.4px;font-size:12.5px;line-height:12.5px;color:#c4c4c4;font-weight:normal;transform:scaleX(0.8837);transform-origin:0 0;">Search</div>
<div class="a" style="left:480px;top:378px;width:16px;height:16px;background:#5a9ac6;border-radius:50%"></div>
<div class="a" style="left:1420px;top:373px;width:112.6px;height:24.6px;background:#dcdcdc;border-radius:2px"></div>
<div class="t" style="left:1435px;top:379.8px;font-size:12px;line-height:12px;color:#fafafa;font-weight:normal;transform:scaleX(0.9042);transform-origin:0 0;">OUNDUP ITEMS</div>
<div class="a" style="left:1543px;top:373px;width:74.6px;height:24.6px;background:#dcdcdc;border-radius:2px"></div>
<div class="t" style="left:1562px;top:379.8px;font-size:12px;line-height:12px;color:#fafafa;font-weight:normal;transform:scaleX(0.8011);transform-origin:0 0;">DELETE</div>
<div class="a" style="left:277px;top:408.5px;width:1359px;height:1.5px;background:#eeeeee;"></div>
<div class="a" style="left:277px;top:440px;width:1359px;height:1px;background:#ececec;"></div>
<div class="a" style="left:277px;top:441px;width:1359px;height:29px;background:#f3f7fa;"></div>
<div class="a" style="left:277px;top:499px;width:1359px;height:29px;background:#f3f7fa;"></div>
<div class="a" style="left:277px;top:557px;width:1359px;height:13px;background:#f3f7fa;"></div>
<div class="a" style="left:307px;top:410px;width:1px;height:160px;background:#ebebeb;"></div>
<div class="a" style="left:397px;top:410px;width:1px;height:160px;background:#ebebeb;"></div>
<div class="a" style="left:1467px;top:410px;width:1px;height:160px;background:#ebebeb;"></div>
<div class="a" style="left:1567px;top:410px;width:1px;height:160px;background:#ebebeb;"></div>
<div class="a" style="left:1636px;top:408.5px;width:15px;height:1px;background:#eeeeee;"></div>
<div class="a" style="left:1650px;top:408.5px;width:1px;height:162px;background:#eeeeee;"></div>
<div class="a" style="left:1639.5px;top:455.6px;width:7.5px;height:115px;background:#e6e6e6;"></div>
<svg style="left:1640px;top:446px;" width="7" height="4" viewBox="0 0 7 4"><path d="M0.5 3.5L3.5 0.5L6.5 3.5" fill="none" stroke="#ddd" stroke-width="1"/></svg>
<div class="a" style="left:284px;top:416px;width:18px;height:17.5px;background:transparent;border:2px solid #5a9ac6;border-radius:3px"></div>
<div class="a" style="left:284px;top:447px;width:18px;height:17.5px;background:transparent;border:2px solid #5a9ac6;border-radius:3px"></div>
<div class="a" style="left:284px;top:476px;width:18px;height:17.5px;background:transparent;border:2px solid #5a9ac6;border-radius:3px"></div>
<div class="a" style="left:284px;top:505px;width:18px;height:17.5px;background:transparent;border:2px solid #5a9ac6;border-radius:3px"></div>
<div class="a" style="left:284px;top:534px;width:18px;height:17.5px;background:transparent;border:2px solid #5a9ac6;border-radius:3px"></div>
<div class="a" style="left:284px;top:563px;width:18px;height:17.5px;background:transparent;border:2px solid #5a9ac6;border-radius:3px"></div>
<div class="t" style="left:313.4px;top:419.1px;font-size:12.5px;line-height:12.5px;color:#6a6a6a;font-weight:normal;transform:scaleX(0.8987);transform-origin:0 0;">PO #</div>
<div class="t" style="left:402.9px;top:419.1px;font-size:12.5px;line-height:12.5px;color:#6a6a6a;font-weight:normal;transform:scaleX(0.9113);transform-origin:0 0;">Vendors</div>
<div class="t" style="left:313.4px;top:448.7px;font-size:12.5px;line-height:12.5px;color:#4d92c2;font-weight:normal;transform:scaleX(0.9169);transform-origin:0 0;">PO-0013825</div>
<div class="t" style="left:402.9px;top:448.7px;font-size:12.5px;line-height:12.5px;color:#4d92c2;font-weight:normal;transform:scaleX(0.9522);transform-origin:0 0;">306 Vendor Card</div>
<div class="t" style="left:1473.3px;top:419.0px;font-size:12.5px;line-height:12.5px;color:#6a6a6a;font-weight:normal;transform:scaleX(0.8340);transform-origin:0 0;">COGS</div>
<div class="a" style="left:1568px;top:415px;width:68px;height:20px;overflow:hidden">
<div class="t" style="left:5.4px;top:4.0px;font-size:12.5px;line-height:12.5px;color:#6a6a6a;font-weight:normal;transform:scaleX(0.9311);transform-origin:0 0;">Landed Cost</div>
</div>
<div class="t" style="left:1434px;top:448.9px;font-size:12.5px;line-height:12.5px;color:#4d92c2;font-weight:normal;transform:scaleX(0.9433);transform-origin:0 0;">5-D</div>
<div class="t" style="left:1473.3px;top:448.9px;font-size:12.5px;line-height:12.5px;color:#5a5a5a;font-weight:normal;transform:scaleX(0.8500);transform-origin:0 0;">$20.00</div>
<svg style="left:1630px;top:377px;" width="18" height="18" viewBox="0 0 18 18"><path d="M7.05 2.69 L7.04 0.22 L10.96 0.22 L10.95 2.69 L12.08 3.16 L13.82 1.40 L16.60 4.18 L14.84 5.92 L15.31 7.05 L17.78 7.04 L17.78 10.96 L15.31 10.95 L14.84 12.08 L16.60 13.82 L13.82 16.60 L12.08 14.84 L10.95 15.31 L10.96 17.78 L7.04 17.78 L7.05 15.31 L5.92 14.84 L4.18 16.60 L1.40 13.82 L3.16 12.08 L2.69 10.95 L0.22 10.96 L0.22 7.04 L2.69 7.05 L3.16 5.92 L1.40 4.18 L4.18 1.40 L5.92 3.16Z" fill="#629fca"/><circle cx="9" cy="9" r="2.8" fill="#fff"/></svg>
<div class="a" style="left:485px;top:195px;width:950px;height:380px;background:#ffffff;border:1px solid #2e2e2e;border-top:none"></div>
<div class="a" style="left:485px;top:195px;width:950px;height:36px;background:#424242;"></div>
<svg style="left:502.79999999999995px;top:203px;" width="20" height="20" viewBox="0 0 20 20"><circle cx="10" cy="10" r="9" fill="#fff"/><path d="M10 2.2 A7.8 7.8 0 0 0 10 17.8 Z" fill="#0f62a0"/><rect x="6.8" y="6.9" width="3.2" height="1.3" rx="0.6" fill="#fff"/><rect x="10" y="6.9" width="3" height="1.3" rx="0.6" fill="#0f62a0"/><rect x="5.7" y="9.25" width="4.3" height="1.5" fill="#c9dbe9"/><rect x="10" y="9.25" width="4.3" height="1.5" fill="#3f82b8"/><rect x="6.8" y="11.9" width="3.2" height="1.3" rx="0.6" fill="#fff"/><rect x="10" y="11.9" width="3" height="1.3" rx="0.6" fill="#0f62a0"/></svg>
<div class="t" style="left:540px;top:207.1px;font-size:14.5px;line-height:14.5px;color:#f2f2f2;font-weight:normal;transform:scaleX(0.8833);transform-origin:0 0;">Send Email</div>
<svg style="left:1401px;top:208px;" width="11" height="11" viewBox="0 0 11 11"><path d="M0.5 0.5L10.5 10.5M10.5 0.5L0.5 10.5" stroke="#f0f0f0" stroke-width="1.2"/></svg>
<div class="t" style="left:502.1px;top:251.1px;font-size:11.5px;line-height:11.5px;color:#555555;font-weight:normal;transform:scaleX(0.8438);transform-origin:0 0;">TO</div>
<div class="t" style="left:516.5px;top:246.4px;font-size:17px;line-height:17px;color:#e53935;font-weight:bold;">*</div>
<div class="a" style="left:502px;top:266px;width:292px;height:24.6px;background:#f3f3f3;border-radius:2px"></div>
<div class="t" style="left:508.3px;top:273.2px;font-size:12.5px;line-height:12.5px;color:#333333;font-weight:normal;transform:scaleX(0.9396);transform-origin:0 0;">katerina.endeko@devpace.net</div>
<div class="t" style="left:810px;top:250.9px;font-size:11.5px;line-height:11.5px;color:#555555;font-weight:normal;transform:scaleX(0.9378);transform-origin:0 0;">FROM</div>
<div class="t" style="left:842.3px;top:246.4px;font-size:17px;line-height:17px;color:#e53935;font-weight:bold;">*</div>
<div class="a" style="left:810px;top:266px;width:291.75px;height:24.6px;background:#f3f3f3;border-radius:2px"></div>
<div class="t" style="left:816px;top:272.9px;font-size:12.5px;line-height:12.5px;color:#5e5e5e;font-weight:normal;transform:scaleX(0.9801);transform-origin:0 0;">omsapptest@gmail.com</div>
<div class="t" style="left:502.25px;top:307.3px;font-size:11.5px;line-height:11.5px;color:#555555;font-weight:normal;transform:scaleX(0.7977);transform-origin:0 0;">CC</div>
<div class="a" style="left:502px;top:322.5px;width:292px;height:23.75px;background:#f3f3f3;border-radius:2px"></div>
<div class="t" style="left:508px;top:329.7px;font-size:12.5px;line-height:12.5px;color:#a4a4a4;font-weight:normal;transform:scaleX(0.9487);transform-origin:0 0;">Contact email</div>
<div class="t" style="left:502.25px;top:363.1px;font-size:11.5px;line-height:11.5px;color:#555555;font-weight:normal;transform:scaleX(0.8031);transform-origin:0 0;">BCC</div>
<div class="a" style="left:502px;top:378px;width:292px;height:24.5px;background:#f3f3f3;border-radius:2px"></div>
<div class="t" style="left:508px;top:385.2px;font-size:12.5px;line-height:12.5px;color:#a4a4a4;font-weight:normal;transform:scaleX(0.9487);transform-origin:0 0;">Contact email</div>
<div class="a" style="left:502px;top:417px;width:600px;height:1px;background:#e2e2e2;"></div>
<div class="t" style="left:502.25px;top:434.3px;font-size:11.5px;line-height:11.5px;color:#555555;font-weight:normal;transform:scaleX(0.8718);transform-origin:0 0;">EMAIL TEMPLATE</div>
<div class="a" style="left:502px;top:448.75px;width:600px;height:25px;background:#f3f3f3;border-radius:2px"></div>
<svg style="left:1087.6px;top:459.4px;" width="9" height="6.2" viewBox="0 0 9 6.2"><path d="M0 0H9L4.5 6.2Z" fill="#c4c4c4"/></svg>
<div class="t" style="left:502.25px;top:491.1px;font-size:11.5px;line-height:11.5px;color:#555555;font-weight:normal;transform:scaleX(0.8016);transform-origin:0 0;">SUBJECT</div>
<div class="t" style="left:545.0px;top:486.9px;font-size:17px;line-height:17px;color:#e53935;font-weight:bold;">*</div>
<div class="a" style="left:502px;top:506.25px;width:600px;height:25px;background:#f3f3f3;border:1.3px solid #e53935;border-radius:2px"></div>
<svg style="left:1091.5px;top:506.25px;" width="10.5" height="10" viewBox="0 0 10.5 10"><path d="M0 0H8.5A2 2 0 0 1 10.5 2V10Z" fill="#e53935"/></svg>
<div class="t" style="left:508px;top:514.0px;font-size:12.5px;line-height:12.5px;color:#a4a4a4;font-weight:normal;transform:scaleX(0.9294);transform-origin:0 0;">Subject</div>
<div class="t" style="left:502.25px;top:547.3px;font-size:11.5px;line-height:11.5px;color:#555555;font-weight:normal;transform:scaleX(0.8501);transform-origin:0 0;">EMAIL TEXT</div>
<div class="a" style="left:502px;top:562px;width:600px;height:20px;background:#f3f3f3;border-radius:2px"></div>
<div class="a" style="left:1126px;top:248px;width:97px;height:25px;background:#0f5e9c;border-radius:1px"></div>
<div class="t" style="left:1141.3px;top:255.8px;font-size:12px;line-height:12px;color:#ffffff;font-weight:normal;transform:scaleX(0.8866);transform-origin:0 0;">ATTACH FILE</div>
<svg style="left:1126px;top:287px;" width="15" height="16" viewBox="0 0 15 16"><path d="M10.2 4.6L4.6 10.2A1.4 1.4 0 0 0 6.6 12.2L12.6 6.2A2.8 2.8 0 0 0 8.6 2.2L2.4 8.4A4 4 0 0 0 8.1 14.1L13.4 8.8" fill="none" stroke="#1b6aa5" stroke-width="1.4" stroke-linecap="round"/></svg>
<div class="t" style="left:1145.2px;top:290.0px;font-size:12.5px;line-height:12.5px;color:#1b6aa5;font-weight:normal;transform:scaleX(0.9498);transform-origin:0 0;">SLT-0000192_2021-06-07.xlsx</div>
<svg style="left:1403px;top:290px;" width="10" height="10" viewBox="0 0 10 10"><path d="M0.5 0.5L9.5 9.5M9.5 0.5L0.5 9.5" stroke="#1b6aa5" stroke-width="1.6"/></svg>
<div class="a" style="left:163px;top:564px;width:1715px;height:500px;background:#ffffff;box-shadow:0 0 22px 2px rgba(0,0,0,0.28)"></div>
<div class="a" style="left:164px;top:564px;width:1712px;height:30px;background:#ffffff;"></div>
<div class="a" style="left:798px;top:564px;width:120px;height:29.5px;background:linear-gradient(#ffffff 0%,#fefcf0 55%,#fbf1c0 85%,#f3d86a 100%);"></div>
<div class="a" style="left:798px;top:564px;width:1px;height:53px;background:#e6e6d8;"></div>
<div class="a" style="left:918px;top:564px;width:1px;height:53px;background:#e6e6d8;"></div>
<div class="t" style="left:805.2px;top:576.4px;font-size:12px;line-height:12px;color:#1e1e1e;font-weight:normal;transform:scaleX(0.9420);transform-origin:0 0;">Работа с таблицами</div>
<div class="t" style="left:440.2px;top:574.4px;font-size:12.5px;line-height:12.5px;color:#1e1e1e;font-weight:normal;transform:scaleX(0.8943);transform-origin:0 0;">SLT-0000192_2021-06-07.xlsx&nbsp; - &nbsp;Microsoft Excel</div>
<div class="a" style="left:1758px;top:579px;width:10px;height:1px;background:#111;"></div>
<div class="a" style="left:1803.5px;top:574.5px;width:9.5px;height:9.5px;background:transparent;border:1px solid #111"></div>
<svg style="left:1849px;top:574px;" width="11" height="11" viewBox="0 0 11 11"><path d="M0.5 0.5L10.5 10.5M10.5 0.5L0.5 10.5" stroke="#111" stroke-width="1.1"/></svg>
<div class="a" style="left:164px;top:594px;width:1712px;height:23.5px;background:#bfdbff;"></div>
<div class="a" style="left:798px;top:594px;width:1px;height:23.5px;background:#d8e6f8;"></div>
<div class="a" style="left:918px;top:594px;width:1px;height:23.5px;background:#d8e6f8;"></div>
<svg style="left:196px;top:569.5px;" width="112" height="23" viewBox="0 0 112 23"><defs><linearGradient id="qatg" x1="0" y1="0" x2="0" y2="1"><stop offset="0" stop-color="#f5f8fc"/><stop offset="1" stop-color="#e6edf6"/></linearGradient></defs><path d="M1.5 1H99A10.7 10.7 0 0 1 99 22.4H15.5C12.5 22.4 12 10 1.5 1Z" fill="url(#qatg)" stroke="#a9b1bd" stroke-width="1"/></svg>
<svg style="left:166px;top:571px;" width="40" height="40" viewBox="0 0 40 40"><defs><linearGradient id="orbg" x1="0" y1="0" x2="0" y2="1"><stop offset="0" stop-color="#fbfaf7"/><stop offset="0.48" stop-color="#e6e3dc"/><stop offset="0.52" stop-color="#cfc9bd"/><stop offset="1" stop-color="#f6edd6"/></linearGradient></defs><circle cx="19.3" cy="19.1" r="17.8" fill="url(#orbg)" stroke="#8a857c" stroke-width="1.1"/><rect x="9.65" y="9.35" width="8.8" height="9.1" rx="2" fill="none" stroke="#e4561b" stroke-width="2.7"/><rect x="22" y="14" width="5.1" height="4.8" rx="1.2" fill="none" stroke="#2f8fe0" stroke-width="2"/><rect x="11.55" y="22.35" width="7.1" height="7.3" rx="1.5" fill="none" stroke="#f6a91d" stroke-width="2.7"/><rect x="22.45" y="22.45" width="6.1" height="6.1" rx="1.5" fill="none" stroke="#58a22e" stroke-width="2.9"/><circle cx="19.5" cy="20.3" r="0.9" fill="#e8561b"/><circle cx="21.6" cy="20.3" r="0.9" fill="#2f8fe0"/></svg>
<svg style="left:216px;top:574px;" width="14" height="14" viewBox="0 0 14 14"><rect x="0" y="0" width="14" height="14" rx="1" fill="#4f4fc8"/><rect x="2.7" y="0.8" width="8.6" height="6" fill="#f4f6fb"/><rect x="3.8" y="9" width="6.5" height="4.2" fill="#e8ecf4"/><rect x="4.2" y="9.8" width="2" height="2.5" fill="#222"/></svg>
<svg style="left:239px;top:575px;" width="12" height="11" viewBox="0 0 12 11"><path d="M3 4H8A3.5 3.5 0 0 1 8 11H5" fill="none" stroke="#8aa3c7" stroke-width="2"/><path d="M0 4L4.5 0V8Z" fill="#8aa3c7"/></svg>
<svg style="left:254px;top:579px;" width="5" height="3" viewBox="0 0 5 3"><path d="M0 0H5L2.5 3Z" fill="#8aa3c7"/></svg>
<svg style="left:270px;top:575px;" width="12" height="11" viewBox="0 0 12 11"><path d="M9 4H4A3.5 3.5 0 0 0 4 11H7" fill="none" stroke="#8aa3c7" stroke-width="2"/><path d="M12 4L7.5 0V8Z" fill="#8aa3c7"/></svg>
<svg style="left:285px;top:579px;" width="5" height="3" viewBox="0 0 5 3"><path d="M0 0H5L2.5 3Z" fill="#8aa3c7"/></svg>
<svg style="left:314px;top:577.5px;" width="6" height="6" viewBox="0 0 6 6"><rect x="0" y="0" width="6" height="1.2" fill="#2b3f80"/><path d="M0 2.5H6L3 6Z" fill="#2b3f80"/></svg>
<div class="a" style="left:211.7px;top:595.8px;width:64.5px;height:22px;background:linear-gradient(#fafcfe,#e8f0fa);border:1px solid #95b4de;border-bottom:none;border-radius:3px 3px 0 0"></div>
<div class="t" style="left:223.5px;top:602.0px;font-size:12px;line-height:12px;color:#15428b;font-weight:normal;transform:scaleX(0.8889);transform-origin:0 0;">Главная</div>
<div class="t" style="left:294.4px;top:602.0px;font-size:12px;line-height:12px;color:#15428b;font-weight:normal;transform:scaleX(0.8744);transform-origin:0 0;">Вставка</div>
<div class="t" style="left:362px;top:602.0px;font-size:12px;line-height:12px;color:#15428b;font-weight:normal;transform:scaleX(0.9370);transform-origin:0 0;">Разметка страницы</div>
<div class="t" style="left:494.4px;top:602.0px;font-size:12px;line-height:12px;color:#15428b;font-weight:normal;transform:scaleX(0.9307);transform-origin:0 0;">Формулы</div>
<div class="t" style="left:571.9px;top:602.0px;font-size:12px;line-height:12px;color:#15428b;font-weight:normal;transform:scaleX(0.9595);transform-origin:0 0;">Данные</div>
<div class="t" style="left:643.1px;top:602.0px;font-size:12px;line-height:12px;color:#15428b;font-weight:normal;transform:scaleX(0.9669);transform-origin:0 0;">Рецензирование</div>
<div class="t" style="left:761px;top:602.0px;font-size:12px;line-height:12px;color:#15428b;font-weight:normal;transform:scaleX(0.8844);transform-origin:0 0;">Вид</div>
<div class="t" style="left:824px;top:602.0px;font-size:12px;line-height:12px;color:#15428b;font-weight:normal;transform:scaleX(0.9734);transform-origin:0 0;">Конструктор</div>
<svg style="left:1793.5px;top:598px;" width="14" height="14" viewBox="0 0 14 14"><circle cx="7" cy="7" r="6.5" fill="#2f6fd6" stroke="#1b3f9c" stroke-width="1"/><circle cx="7" cy="7" r="5" fill="none" stroke="#8fc0ff" stroke-width="0.8"/><text x="7" y="11" font-size="10" font-weight="bold" text-anchor="middle" fill="#fff" font-family="Liberation Sans">?</text></svg>
<div class="a" style="left:1818px;top:606.5px;width:7px;height:2px;background:#6b6b6b;"></div>
<svg style="left:1839px;top:601px;" width="9" height="7" viewBox="0 0 9 7"><rect x="0.5" y="2" width="6" height="4.5" fill="none" stroke="#777" stroke-width="1"/><path d="M2.5 2V0.5H8.5V4.5H6.5" fill="none" stroke="#777" stroke-width="1"/><rect x="0.5" y="1.5" width="6" height="1.2" fill="#777"/></svg>
<svg style="left:1862px;top:601px;" width="9" height="8" viewBox="0 0 9 8"><path d="M1 0.5L8 7.5M8 0.5L1 7.5" stroke="#777" stroke-width="2"/></svg>
<div class="a" style="left:164px;top:617px;width:1712px;height:90px;background:#c4dbf7;"></div>
<div class="a" style="left:165px;top:617.5px;width:1711px;height:89.5px;background:linear-gradient(#dde8f5 0%,#d9e5f4 18%,#c6d8ee 20%,#cadcf0 60%,#dcecf9 92%,#e6f5fd 100%);border:1px solid #9fbfe6;border-radius:3px"></div>
<div class="a" style="left:167.9px;top:620.5px;width:187.49999999999997px;height:84px;background:linear-gradient(#dde8f5 0%,#d8e4f3 15%,#c8d9ee 17%,#cfdef0 70%,#e8f3fc 100%);border:1px solid #9ebde4;border-radius:3px"></div>
<div class="a" style="left:168.9px;top:689px;width:185.49999999999997px;height:15px;background:linear-gradient(#c4d8f0,#c9dcf2);border-radius:0 0 2px 2px"></div>
<div class="t" style="left:214.2px;top:691.6px;font-size:12px;line-height:12px;color:#3e6aaa;font-weight:normal;transform:scaleX(0.9394);transform-origin:0 0;">Буфер обмена</div>
<div class="a" style="left:359.4px;top:620.5px;width:194.35000000000002px;height:84px;background:linear-gradient(#dde8f5 0%,#d8e4f3 15%,#c8d9ee 17%,#cfdef0 70%,#e8f3fc 100%);border:1px solid #9ebde4;border-radius:3px"></div>
<div class="a" style="left:360.4px;top:689px;width:192.35000000000002px;height:15px;background:linear-gradient(#c4d8f0,#c9dcf2);border-radius:0 0 2px 2px"></div>
<div class="t" style="left:428.75px;top:691.6px;font-size:12px;line-height:12px;color:#3e6aaa;font-weight:normal;transform:scaleX(0.9625);transform-origin:0 0;">Шрифт</div>
<div class="a" style="left:558.75px;top:620.5px;width:353.75px;height:84px;background:linear-gradient(#dde8f5 0%,#d8e4f3 15%,#c8d9ee 17%,#cfdef0 70%,#e8f3fc 100%);border:1px solid #9ebde4;border-radius:3px"></div>
<div class="a" style="left:559.75px;top:689px;width:351.75px;height:15px;background:linear-gradient(#c4d8f0,#c9dcf2);border-radius:0 0 2px 2px"></div>
<div class="t" style="left:687px;top:691.6px;font-size:12px;line-height:12px;color:#3e6aaa;font-weight:normal;transform:scaleX(0.9516);transform-origin:0 0;">Выравнивание</div>
<div class="a" style="left:916.7px;top:620.5px;width:134.79999999999995px;height:84px;background:linear-gradient(#dde8f5 0%,#d8e4f3 15%,#c8d9ee 17%,#cfdef0 70%,#e8f3fc 100%);border:1px solid #9ebde4;border-radius:3px"></div>
<div class="a" style="left:917.7px;top:689px;width:132.79999999999995px;height:15px;background:linear-gradient(#c4d8f0,#c9dcf2);border-radius:0 0 2px 2px"></div>
<div class="t" style="left:959.8px;top:691.6px;font-size:12px;line-height:12px;color:#3e6aaa;font-weight:normal;transform:scaleX(0.8924);transform-origin:0 0;">Число</div>
<div class="a" style="left:1055.6px;top:620.5px;width:247.9000000000001px;height:84px;background:linear-gradient(#dde8f5 0%,#d8e4f3 15%,#c8d9ee 17%,#cfdef0 70%,#e8f3fc 100%);border:1px solid #9ebde4;border-radius:3px"></div>
<div class="a" style="left:1056.6px;top:689px;width:245.9000000000001px;height:15px;background:linear-gradient(#c4d8f0,#c9dcf2);border-radius:0 0 2px 2px"></div>
<div class="t" style="left:1164px;top:691.6px;font-size:12px;line-height:12px;color:#3e6aaa;font-weight:normal;transform:scaleX(0.9198);transform-origin:0 0;">Стили</div>
<div class="a" style="left:1307.7px;top:620.5px;width:149.29999999999995px;height:84px;background:linear-gradient(#dde8f5 0%,#d8e4f3 15%,#c8d9ee 17%,#cfdef0 70%,#e8f3fc 100%);border:1px solid #9ebde4;border-radius:3px"></div>
<div class="a" style="left:1308.7px;top:689px;width:147.29999999999995px;height:15px;background:linear-gradient(#c4d8f0,#c9dcf2);border-radius:0 0 2px 2px"></div>
<div class="t" style="left:1363.3px;top:691.6px;font-size:12px;line-height:12px;color:#3e6aaa;font-weight:normal;transform:scaleX(0.9839);transform-origin:0 0;">Ячейки</div>
<div class="a" style="left:1461.7px;top:620.5px;width:232.5px;height:84px;background:linear-gradient(#dde8f5 0%,#d8e4f3 15%,#c8d9ee 17%,#cfdef0 70%,#e8f3fc 100%);border:1px solid #9ebde4;border-radius:3px"></div>
<div class="a" style="left:1462.7px;top:689px;width:230.5px;height:15px;background:linear-gradient(#c4d8f0,#c9dcf2);border-radius:0 0 2px 2px"></div>
<div class="t" style="left:1534px;top:691.6px;font-size:12px;line-height:12px;color:#3e6aaa;font-weight:normal;transform:scaleX(0.9594);transform-origin:0 0;">Редактирование</div>
<svg style="left:343px;top:693px;" width="8" height="7" viewBox="0 0 8 7"><rect x="0.5" y="0.5" width="7" height="6" fill="none" stroke="#8aa6cc" stroke-width="1"/><path d="M3 3L6.5 6" stroke="#3e6aaa" stroke-width="1.2"/></svg>
<svg style="left:544px;top:693px;" width="8" height="7" viewBox="0 0 8 7"><rect x="0.5" y="0.5" width="7" height="6" fill="none" stroke="#8aa6cc" stroke-width="1"/><path d="M3 3L6.5 6" stroke="#3e6aaa" stroke-width="1.2"/></svg>
<svg style="left:901.5px;top:693px;" width="8" height="7" viewBox="0 0 8 7"><rect x="0.5" y="0.5" width="7" height="6" fill="none" stroke="#8aa6cc" stroke-width="1"/><path d="M3 3L6.5 6" stroke="#3e6aaa" stroke-width="1.2"/></svg>
<svg style="left:1040.5px;top:693px;" width="8" height="7" viewBox="0 0 8 7"><rect x="0.5" y="0.5" width="7" height="6" fill="none" stroke="#8aa6cc" stroke-width="1"/><path d="M3 3L6.5 6" stroke="#3e6aaa" stroke-width="1.2"/></svg>
<svg style="left:181.9px;top:625.6px;" width="29" height="30" viewBox="0 0 29 30"><rect x="1" y="3" width="22" height="24" rx="2" fill="#f0c069" stroke="#c99a45" stroke-width="1"/><rect x="6" y="1" width="12" height="5" rx="1" fill="#e6e9ee" stroke="#7d8795" stroke-width="0.8"/><path d="M9 10H22L27 15V29H9Z" fill="#fff" stroke="#8e9bb0" stroke-width="0.8"/><path d="M12 15H23M12 18H23M12 21H23M12 24H23" stroke="#c3cad6" stroke-width="1"/></svg>
<div class="t" style="left:173.5px;top:661.4px;font-size:12px;line-height:12px;color:#15428b;font-weight:normal;transform:scaleX(0.9024);transform-origin:0 0;">Вставить</div>
<svg style="left:193.3px;top:678.3px;" width="5" height="3" viewBox="0 0 5 3"><path d="M0 0H5L2.5 3Z" fill="#3b5a8c"/></svg>
<svg style="left:226.7px;top:626px;" width="11" height="14" viewBox="0 0 11 14"><path d="M3.5 0L6 8M8 0L5 8" stroke="#7a7f88" stroke-width="1.3"/><circle cx="3" cy="11" r="2.3" fill="none" stroke="#2b48a8" stroke-width="1.6"/><circle cx="8" cy="11" r="2.3" fill="none" stroke="#2b48a8" stroke-width="1.6"/></svg>
<div class="t" style="left:244.4px;top:628.0px;font-size:12px;line-height:12px;color:#15428b;font-weight:normal;transform:scaleX(0.9087);transform-origin:0 0;">Вырезать</div>
<svg style="left:225px;top:648.5px;" width="15" height="13" viewBox="0 0 15 13"><path d="M0.5 0.5H6L8 2.5V9H0.5Z" fill="#fff" stroke="#5b6f99" stroke-width="0.8"/><path d="M6.5 3.5H12L14.5 6V12.5H6.5Z" fill="#fff" stroke="#2b48a8" stroke-width="0.9"/><path d="M8.5 7H12.5M8.5 9H12.5M8.5 11H12.5" stroke="#3b6fd0" stroke-width="0.8"/></svg>
<div class="t" style="left:244.4px;top:650.0px;font-size:12px;line-height:12px;color:#15428b;font-weight:normal;transform:scaleX(0.9828);transform-origin:0 0;">Копировать</div>
<svg style="left:225px;top:669.4px;" width="16" height="15" viewBox="0 0 16 15"><path d="M10 6L15 1" stroke="#5c55a8" stroke-width="2.5"/><path d="M1 11L6 5L11 9L5 14Z" fill="#ead97a" stroke="#9b8a3a" stroke-width="0.8"/></svg>
<div class="t" style="left:243.75px;top:671.8px;font-size:12px;line-height:12px;color:#15428b;font-weight:normal;transform:scaleX(0.9684);transform-origin:0 0;">Формат по образцу</div>
<div class="a" style="left:363.75px;top:630.8px;width:95.25px;height:20.2px;background:#eaf1fb;border:1px solid #b9cde8"></div>
<div class="t" style="left:366.25px;top:635.4px;font-size:12px;line-height:12px;color:#111;font-weight:normal;transform:scaleX(0.9497);transform-origin:0 0;">Calibri</div>
<svg style="left:449.6px;top:640px;" width="5" height="3" viewBox="0 0 5 3"><path d="M0 0H5L2.5 3Z" fill="#3b5a8c"/></svg>
<div class="a" style="left:460px;top:630.8px;width:41.7px;height:20.2px;background:#eaf1fb;border:1px solid #b9cde8"></div>
<div class="t" style="left:463.1px;top:635.4px;font-size:12px;line-height:12px;color:#111;font-weight:normal;transform:scaleX(0.8348);transform-origin:0 0;">11</div>
<svg style="left:493px;top:640px;" width="5" height="3" viewBox="0 0 5 3"><path d="M0 0H5L2.5 3Z" fill="#3b5a8c"/></svg>
<div class="a" style="left:506.25px;top:630.8px;width:43.75px;height:20.2px;background:linear-gradient(#f2f6fb,#d7e4f4);border:1px solid #a9c2e3;border-radius:3px"></div>
<div class="a" style="left:527.5px;top:632px;width:1px;height:18px;background:#b9cde8;"></div>
<div class="t" style="left:511px;top:634.7px;font-size:16px;line-height:16px;color:#222;font-weight:bold;font-family:'Liberation Serif';transform:scaleX(0.9952);transform-origin:0 0;">A</div>
<svg style="left:518px;top:634px;" width="5" height="3" viewBox="0 0 5 3"><path d="M0 0H5L2.5 3Z" fill="#2b4fa8"/></svg>
<div class="t" style="left:531px;top:637.0px;font-size:12px;line-height:12px;color:#222;font-weight:bold;font-family:'Liberation Serif';transform:scaleX(0.9808);transform-origin:0 0;">A</div>
<svg style="left:538px;top:634px;" width="5" height="3" viewBox="0 0 5 3"><path d="M0 0H5L2.5 3Z" fill="#2b4fa8"/></svg>
<div class="a" style="left:363.75px;top:660px;width:78.5px;height:19.8px;background:linear-gradient(#f2f6fb,#d7e4f4);border:1px solid #a9c2e3;border-radius:3px"></div>
<div class="a" style="left:363.75px;top:660px;width:21px;height:19.8px;background:linear-gradient(#fde7a8,#fbbd4e);border:1px solid #c99a45;border-radius:3px 0 0 3px"></div>
<div class="t" style="left:369px;top:665.6px;font-size:12.5px;line-height:12.5px;color:#111;font-weight:bold;transform:scaleX(0.9736);transform-origin:0 0;">Ж</div>
<div class="t" style="left:392px;top:665.6px;font-size:12.5px;line-height:12.5px;color:#111;font-weight:bold;font-style:italic;transform:scaleX(1.2451);transform-origin:0 0;">К</div>
<div class="t" style="left:414.5px;top:665.6px;font-size:12.5px;line-height:12.5px;color:#111;font-weight:bold;text-decoration:underline;transform:scaleX(1.0247);transform-origin:0 0;">Ч</div>
<svg style="left:434px;top:668.5px;" width="5" height="3" viewBox="0 0 5 3"><path d="M0 0H5L2.5 3Z" fill="#3b5a8c"/></svg>
<div class="a" style="left:446.5px;top:660px;width:33.3px;height:19.8px;background:linear-gradient(#f2f6fb,#d7e4f4);border:1px solid #a9c2e3;border-radius:3px"></div>
<svg style="left:451px;top:664px;" width="14" height="12" viewBox="0 0 14 12"><rect x="0.5" y="0.5" width="13" height="11" fill="none" stroke="#9aa" stroke-width="1" stroke-dasharray="1 1"/><path d="M7 0.5V11.5M0.5 6H13.5" stroke="#9aa" stroke-width="1" stroke-dasharray="1 1"/><path d="M0 11.5H14" stroke="#222" stroke-width="1.3"/></svg>
<svg style="left:472px;top:668.5px;" width="5" height="3" viewBox="0 0 5 3"><path d="M0 0H5L2.5 3Z" fill="#3b5a8c"/></svg>
<div class="a" style="left:484.6px;top:660px;width:65.4px;height:19.8px;background:linear-gradient(#f2f6fb,#d7e4f4);border:1px solid #a9c2e3;border-radius:3px"></div>
<svg style="left:488px;top:662px;" width="16" height="16" viewBox="0 0 16 16"><path d="M3 7L8 2L13 7L8 12Z" fill="#fff" stroke="#333" stroke-width="1"/><rect x="0" y="12" width="16" height="3.5" fill="#ffef00"/></svg>
<svg style="left:507.5px;top:668.5px;" width="5" height="3" viewBox="0 0 5 3"><path d="M0 0H5L2.5 3Z" fill="#3b5a8c"/></svg>
<svg style="left:520.4px;top:662px;" width="17" height="16" viewBox="0 0 17 16"><text x="8.5" y="11" font-size="13" font-weight="bold" text-anchor="middle" fill="#2b3f80" font-family="Liberation Serif">A</text><rect x="0" y="12" width="17" height="3.5" fill="#e00"/></svg>
<svg style="left:541px;top:668.5px;" width="5" height="3" viewBox="0 0 5 3"><path d="M0 0H5L2.5 3Z" fill="#3b5a8c"/></svg>
<div class="a" style="left:562.5px;top:630.4px;width:67.70000000000005px;height:21.3px;background:linear-gradient(#f2f6fb,#d7e4f4);border:1px solid #a9c2e3;border-radius:3px"></div>
<div class="a" style="left:585px;top:631.4px;width:1px;height:19.3px;background:#b9cde8;"></div>
<div class="a" style="left:608px;top:631.4px;width:1px;height:19.3px;background:#b9cde8;"></div>
<div class="a" style="left:609px;top:631px;width:21px;height:20px;background:linear-gradient(#fde7a8,#fbbd4e);border-radius:0 3px 3px 0"></div>
<svg style="left:567px;top:633px;" width="14" height="14" viewBox="0 0 14 14"><rect x="0" y="0" width="13" height="1.3" fill="#222"/><rect x="2" y="3" width="9" height="1.3" fill="#222"/><rect x="0" y="6" width="13" height="1.3" fill="#222"/></svg>
<svg style="left:589px;top:638px;" width="14" height="14" viewBox="0 0 14 14"><rect x="0" y="0" width="13" height="1.3" fill="#222"/><rect x="0" y="3" width="13" height="1.3" fill="#222"/><rect x="0" y="6" width="13" height="1.3" fill="#222"/></svg>
<svg style="left:613px;top:640px;" width="14" height="14" viewBox="0 0 14 14"><rect x="0" y="0" width="13" height="1.3" fill="#222"/><rect x="0" y="3" width="13" height="1.3" fill="#222"/><rect x="0" y="6" width="13" height="1.3" fill="#222"/></svg>
<div class="a" style="left:634.4px;top:630.4px;width:31.200000000000045px;height:21.3px;background:linear-gradient(#f2f6fb,#d7e4f4);border:1px solid #a9c2e3;border-radius:3px"></div>
<svg style="left:639px;top:633px;" width="16" height="14" viewBox="0 0 16 14"><path d="M1 9L9 1M3 11L11 3" stroke="#333" stroke-width="1.5"/><path d="M8 12L14 6" stroke="#334" stroke-width="1"/></svg>
<svg style="left:657px;top:639px;" width="5" height="3" viewBox="0 0 5 3"><path d="M0 0H5L2.5 3Z" fill="#3b5a8c"/></svg>
<div class="a" style="left:683px;top:627.7px;width:1px;height:53px;background:#b3c8e3;"></div>
<svg style="left:690px;top:633px;" width="16" height="15" viewBox="0 0 16 15"><rect x="0.5" y="0.5" width="10" height="3" fill="none" stroke="#555" stroke-width="0.9"/><rect x="0.5" y="5" width="10" height="3" fill="#f2b06b" stroke="#555" stroke-width="0.9"/><rect x="0.5" y="9.5" width="10" height="3" fill="#f2b06b" stroke="#555" stroke-width="0.9"/><path d="M12 5V11H14" fill="none" stroke="#2b48a8" stroke-width="1.2"/></svg>
<div class="t" style="left:709.4px;top:635.4px;font-size:12px;line-height:12px;color:#15428b;font-weight:normal;transform:scaleX(0.9361);transform-origin:0 0;">Перенос текста</div>
<div class="a" style="left:562.5px;top:659.6px;width:67.70000000000005px;height:20.8px;background:linear-gradient(#f2f6fb,#d7e4f4);border:1px solid #a9c2e3;border-radius:3px"></div>
<div class="a" style="left:585px;top:660.6px;width:1px;height:18.8px;background:#b9cde8;"></div>
<div class="a" style="left:608px;top:660.6px;width:1px;height:18.8px;background:#b9cde8;"></div>
<svg style="left:567px;top:664px;" width="14" height="14" viewBox="0 0 14 14"><rect x="0" y="0" width="13" height="1.3" fill="#222"/><rect x="0" y="3" width="9" height="1.3" fill="#222"/><rect x="0" y="6" width="13" height="1.3" fill="#222"/><rect x="0" y="9" width="9" height="1.3" fill="#222"/></svg>
<svg style="left:589px;top:664px;" width="14" height="14" viewBox="0 0 14 14"><rect x="0" y="0" width="13" height="1.3" fill="#222"/><rect x="2" y="3" width="9" height="1.3" fill="#222"/><rect x="0" y="6" width="13" height="1.3" fill="#222"/><rect x="2" y="9" width="9" height="1.3" fill="#222"/></svg>
<svg style="left:612px;top:664px;" width="14" height="14" viewBox="0 0 14 14"><rect x="0" y="0" width="13" height="1.3" fill="#222"/><rect x="4" y="3" width="9" height="1.3" fill="#222"/><rect x="0" y="6" width="13" height="1.3" fill="#222"/><rect x="4" y="9" width="9" height="1.3" fill="#222"/></svg>
<div class="a" style="left:634.4px;top:659.6px;width:43.700000000000045px;height:20.8px;background:linear-gradient(#f2f6fb,#d7e4f4);border:1px solid #a9c2e3;border-radius:3px"></div>
<div class="a" style="left:656px;top:660.6px;width:1px;height:18.8px;background:#b9cde8;"></div>
<svg style="left:638px;top:664px;" width="14" height="14" viewBox="0 0 14 14"><rect x="4" y="0" width="9" height="1.3" fill="#222"/><rect x="4" y="3" width="9" height="1.3" fill="#222"/><rect x="4" y="6" width="9" height="1.3" fill="#222"/><rect x="4" y="9" width="9" height="1.3" fill="#222"/></svg>
<svg style="left:660px;top:664px;" width="14" height="14" viewBox="0 0 14 14"><rect x="4" y="0" width="9" height="1.3" fill="#222"/><rect x="4" y="3" width="9" height="1.3" fill="#222"/><rect x="4" y="6" width="9" height="1.3" fill="#222"/><rect x="4" y="9" width="9" height="1.3" fill="#222"/></svg>
<svg style="left:690px;top:662px;" width="16" height="15" viewBox="0 0 16 15"><rect x="0.5" y="0.5" width="15" height="14" fill="none" stroke="#aab" stroke-width="0.9"/><text x="8" y="10.5" font-size="9" text-anchor="middle" fill="#889" font-family="Liberation Serif">a</text></svg>
<div class="t" style="left:709.4px;top:664.5px;font-size:12px;line-height:12px;color:#97a4b6;font-weight:normal;transform:scaleX(0.9633);transform-origin:0 0;">Объединить и поместить в центре</div>
<svg style="left:899px;top:669px;" width="5" height="3" viewBox="0 0 5 3"><path d="M0 0H5L2.5 3Z" fill="#a9b4c4"/></svg>
<div class="a" style="left:920px;top:630.8px;width:127.3px;height:20.2px;background:#eaf1fb;border:1px solid #b9cde8"></div>
<div class="t" style="left:922.9px;top:635.4px;font-size:12px;line-height:12px;color:#111;font-weight:normal;transform:scaleX(0.9877);transform-origin:0 0;">Общий</div>
<svg style="left:1038px;top:640px;" width="5" height="3" viewBox="0 0 5 3"><path d="M0 0H5L2.5 3Z" fill="#3b5a8c"/></svg>
<div class="a" style="left:923px;top:659.6px;width:76.39999999999998px;height:20.8px;background:linear-gradient(#f2f6fb,#d7e4f4);border:1px solid #a9c2e3;border-radius:3px"></div>
<div class="a" style="left:948px;top:660.6px;width:1px;height:18.8px;background:#b9cde8;"></div>
<div class="a" style="left:974px;top:660.6px;width:1px;height:18.8px;background:#b9cde8;"></div>
<div class="t" style="left:928px;top:665.7px;font-size:13px;line-height:13px;color:#111;font-weight:bold;transform:scaleX(1.0373);transform-origin:0 0;">$</div>
<svg style="left:945px;top:668.5px;" width="5" height="3" viewBox="0 0 5 3"><path d="M0 0H5L2.5 3Z" fill="#3b5a8c"/></svg>
<div class="t" style="left:959.8px;top:666.0px;font-size:12px;line-height:12px;color:#111;font-weight:normal;transform:scaleX(1.0778);transform-origin:0 0;">%</div>
<div class="t" style="left:981.7px;top:666.9px;font-size:11px;line-height:11px;color:#111;font-weight:normal;transform:scaleX(0.7900);transform-origin:0 0;">000</div>
<div class="a" style="left:1003.5px;top:659.6px;width:43.799999999999955px;height:20.8px;background:linear-gradient(#f2f6fb,#d7e4f4);border:1px solid #a9c2e3;border-radius:3px"></div>
<div class="a" style="left:1025px;top:660.6px;width:1px;height:18.8px;background:#b9cde8;"></div>
<div class="t" style="left:1008px;top:664.3px;font-size:7px;line-height:7px;color:#2b48a8;font-weight:normal;transform:scaleX(1.0126);transform-origin:0 0;">&larr;,0</div>
<div class="t" style="left:1008px;top:671.4px;font-size:8px;line-height:8px;color:#111;font-weight:normal;transform:scaleX(1.0790);transform-origin:0 0;">,00</div>
<div class="t" style="left:1029px;top:663.4px;font-size:8px;line-height:8px;color:#111;font-weight:normal;transform:scaleX(1.0790);transform-origin:0 0;">,00</div>
<div class="t" style="left:1028px;top:672.3px;font-size:7px;line-height:7px;color:#2b48a8;font-weight:normal;transform:scaleX(1.0126);transform-origin:0 0;">&rarr;,0</div>
<svg style="left:1097.3px;top:627px;" width="30" height="28" viewBox="0 0 30 28"><g stroke="#9aa8bb" stroke-width="0.8" fill="#fff"><rect x="0.5" y="0.5" width="6.5" height="6"/><rect x="7" y="0.5" width="6.5" height="6"/><rect x="13.5" y="0.5" width="6.5" height="6"/><rect x="0.5" y="6.5" width="6.5" height="6"/><rect x="0.5" y="12.5" width="6.5" height="6"/><rect x="0.5" y="18.5" width="6.5" height="6"/><rect x="20" y="0.5" width="6.5" height="6"/><rect x="20" y="6.5" width="6.5" height="6"/></g><rect x="7" y="0.5" width="6.5" height="6" fill="#e8493c"/><rect x="7" y="6.5" width="13" height="6" fill="#5b8fe0"/><rect x="7" y="12.5" width="9.5" height="6" fill="#e8493c"/><rect x="7" y="18.5" width="6.5" height="6" fill="#5b8fe0"/><rect x="15" y="15" width="14" height="13" fill="#fff" stroke="#555" stroke-width="0.8"/><path d="M18 18H26M18 21H26M18 24H26" stroke="#333" stroke-width="1"/></svg>
<div class="t" style="left:1086.9px;top:661.4px;font-size:12px;line-height:12px;color:#15428b;font-weight:normal;transform:scaleX(0.9362);transform-origin:0 0;">Условное</div>
<div class="t" style="left:1061.9px;top:675.0px;font-size:12px;line-height:12px;color:#15428b;font-weight:normal;transform:scaleX(0.9725);transform-origin:0 0;">форматирование</div>
<svg style="left:1158.75px;top:680px;" width="5" height="3" viewBox="0 0 5 3"><path d="M0 0H5L2.5 3Z" fill="#3b5a8c"/></svg>
<svg style="left:1195.2px;top:627px;" width="30" height="28" viewBox="0 0 30 28"><g stroke="#9aa8bb" stroke-width="0.8" fill="#fff"><rect x="0.5" y="0.5" width="6.5" height="6"/><rect x="0.5" y="6.5" width="6.5" height="6"/><rect x="0.5" y="12.5" width="6.5" height="6"/><rect x="0.5" y="18.5" width="6.5" height="6"/><rect x="7" y="0.5" width="6.5" height="6"/><rect x="7" y="6.5" width="6.5" height="6"/><rect x="7" y="12.5" width="6.5" height="6"/><rect x="7" y="18.5" width="6.5" height="6"/><rect x="13.5" y="0.5" width="6.5" height="6"/><rect x="13.5" y="6.5" width="6.5" height="6"/><rect x="13.5" y="12.5" width="6.5" height="6"/><rect x="13.5" y="18.5" width="6.5" height="6"/><rect x="20" y="0.5" width="6.5" height="6"/><rect x="20" y="6.5" width="6.5" height="6"/><rect x="20" y="12.5" width="6.5" height="6"/><rect x="20" y="18.5" width="6.5" height="6"/></g><rect x="7" y="6.5" width="19.5" height="18" fill="#8fb0e8" opacity="0.85"/><path d="M29 7L19 23" stroke="#9b7c4a" stroke-width="2.5"/><path d="M15 23L20 21L18 27L12 28Z" fill="#4a72c7"/></svg>
<div class="t" style="left:1168.5px;top:661.4px;font-size:12px;line-height:12px;color:#15428b;font-weight:normal;transform:scaleX(0.9646);transform-origin:0 0;">Форматировать</div>
<div class="t" style="left:1175.4px;top:675.0px;font-size:12px;line-height:12px;color:#15428b;font-weight:normal;transform:scaleX(0.9769);transform-origin:0 0;">как таблицу</div>
<svg style="left:1241.7px;top:680px;" width="5" height="3" viewBox="0 0 5 3"><path d="M0 0H5L2.5 3Z" fill="#3b5a8c"/></svg>
<svg style="left:1261.9px;top:627px;" width="30" height="28" viewBox="0 0 30 28"><rect x="0.5" y="0.5" width="26" height="22" fill="#fff" stroke="#9aa8bb" stroke-width="0.8"/><rect x="4" y="4" width="19" height="15" fill="#8fb0e8"/><path d="M29 7L19 23" stroke="#9b7c4a" stroke-width="2.5"/><path d="M15 23L20 21L18 27L12 28Z" fill="#4a72c7"/></svg>
<div class="t" style="left:1261.25px;top:661.4px;font-size:12px;line-height:12px;color:#15428b;font-weight:normal;transform:scaleX(0.9039);transform-origin:0 0;">Стили</div>
<div class="t" style="left:1258.3px;top:675.0px;font-size:12px;line-height:12px;color:#15428b;font-weight:normal;transform:scaleX(0.9570);transform-origin:0 0;">ячеек</div>
<svg style="left:1292px;top:680px;" width="5" height="3" viewBox="0 0 5 3"><path d="M0 0H5L2.5 3Z" fill="#3b5a8c"/></svg>
<svg style="left:1319px;top:626.7px;" width="31" height="26" viewBox="0 0 31 26"><g fill="#eef2f8" stroke="#b7c2d2" stroke-width="0.8"><rect x="0.5" y="0.5" width="8" height="5"/><rect x="8.5" y="0.5" width="8" height="5"/><rect x="0.5" y="19.5" width="8" height="5"/><rect x="8.5" y="19.5" width="8" height="5"/><rect x="14" y="10" width="8" height="5" fill="#c6cfdc"/><rect x="22" y="10" width="8" height="5" fill="#c6cfdc"/></g><path d="M12 12.5H4M6 10.5L4 12.5L6 14.5" fill="none" stroke="#a0a8b8" stroke-width="1"/></svg>
<div class="t" style="left:1312.9px;top:661.4px;font-size:12px;line-height:12px;color:#15428b;font-weight:normal;transform:scaleX(0.9004);transform-origin:0 0;">Вставить</div>
<svg style="left:1333px;top:679px;" width="5" height="3" viewBox="0 0 5 3"><path d="M0 0H5L2.5 3Z" fill="#3b5a8c"/></svg>
<svg style="left:1371.7px;top:626.7px;" width="25" height="26" viewBox="0 0 25 26"><g fill="#eef2f8" stroke="#b7c2d2" stroke-width="0.8"><rect x="0.5" y="0.5" width="8" height="5"/><rect x="8.5" y="0.5" width="8" height="5"/><rect x="0.5" y="19.5" width="8" height="5"/><rect x="8.5" y="19.5" width="8" height="5"/><rect x="4" y="10" width="12" height="5" stroke-dasharray="1 1"/></g><path d="M14 7L22 15M22 7L14 15" stroke="#b7c2d2" stroke-width="2"/></svg>
<div class="t" style="left:1364.4px;top:661.4px;font-size:12px;line-height:12px;color:#15428b;font-weight:normal;transform:scaleX(0.8949);transform-origin:0 0;">Удалить</div>
<svg style="left:1382px;top:679px;" width="5" height="3" viewBox="0 0 5 3"><path d="M0 0H5L2.5 3Z" fill="#3b5a8c"/></svg>
<svg style="left:1415px;top:626.7px;" width="30" height="28" viewBox="0 0 30 28"><path d="M0.5 1H28" stroke="#444" stroke-width="0.8" stroke-dasharray="1.5 1"/><g fill="#fff" stroke="#8b97aa" stroke-width="0.8"><rect x="0.5" y="4" width="9" height="6"/><rect x="9.5" y="4" width="9" height="6"/><rect x="18.5" y="4" width="9" height="6"/><rect x="0.5" y="10" width="9" height="15"/><rect x="18.5" y="10" width="9" height="15"/><rect x="3" y="22" width="8" height="5"/><rect x="12" y="22" width="8" height="5"/></g><rect x="9.5" y="10" width="9" height="12" fill="#5b8fe0"/></svg>
<div class="t" style="left:1410.8px;top:661.4px;font-size:12px;line-height:12px;color:#15428b;font-weight:normal;transform:scaleX(0.9383);transform-origin:0 0;">Формат</div>
<svg style="left:1428px;top:679px;" width="5" height="3" viewBox="0 0 5 3"><path d="M0 0H5L2.5 3Z" fill="#3b5a8c"/></svg>
<div class="t" style="left:1470.6px;top:627.2px;font-size:13px;line-height:13px;color:#111;font-weight:bold;transform:scaleX(1.2178);transform-origin:0 0;">&Sigma;</div>
<div class="t" style="left:1487.3px;top:628.0px;font-size:12px;line-height:12px;color:#15428b;font-weight:normal;transform:scaleX(0.9184);transform-origin:0 0;">Автосумма</div>
<svg style="left:1548.5px;top:632px;" width="5" height="3" viewBox="0 0 5 3"><path d="M0 0H5L2.5 3Z" fill="#3b5a8c"/></svg>
<svg style="left:1469.2px;top:647.5px;" width="13" height="15" viewBox="0 0 13 15"><rect x="0.5" y="0.5" width="12" height="14" fill="#dce8fa" stroke="#4a72c7" stroke-width="1"/><path d="M6.5 3V10M3.5 7.5L6.5 11L9.5 7.5" fill="none" stroke="#2b58b8" stroke-width="1.8"/></svg>
<div class="t" style="left:1487.3px;top:650.0px;font-size:12px;line-height:12px;color:#15428b;font-weight:normal;transform:scaleX(0.9625);transform-origin:0 0;">Заполнить</div>
<svg style="left:1547.7px;top:654px;" width="5" height="3" viewBox="0 0 5 3"><path d="M0 0H5L2.5 3Z" fill="#3b5a8c"/></svg>
<svg style="left:1469px;top:669px;" width="15" height="15" viewBox="0 0 15 15"><path d="M1 9L8 2L13 6L6 13H2Z" fill="#f2f2f2" stroke="#666" stroke-width="0.9"/><path d="M2 14.5H14" stroke="#222" stroke-width="1"/></svg>
<div class="t" style="left:1487.3px;top:671.8px;font-size:12px;line-height:12px;color:#15428b;font-weight:normal;transform:scaleX(0.9763);transform-origin:0 0;">Очистить</div>
<svg style="left:1542px;top:676px;" width="5" height="3" viewBox="0 0 5 3"><path d="M0 0H5L2.5 3Z" fill="#3b5a8c"/></svg>
<svg style="left:1576.9px;top:626px;" width="31" height="29" viewBox="0 0 31 29"><text x="1" y="14" font-size="15" fill="#2b58b8" font-family="Liberation Serif" font-weight="bold">A</text><text x="0" y="28" font-size="15" fill="#b0362a" font-family="Liberation Serif" font-weight="bold">Я</text><path d="M10 6H30L23 15V26H18V15Z" fill="#c8ccd2" stroke="#8a9098" stroke-width="0.8"/></svg>
<div class="t" style="left:1560.2px;top:661.4px;font-size:12px;line-height:12px;color:#15428b;font-weight:normal;transform:scaleX(0.9748);transform-origin:0 0;">Сортировка</div>
<div class="t" style="left:1563.3px;top:675.0px;font-size:12px;line-height:12px;color:#15428b;font-weight:normal;transform:scaleX(1.0196);transform-origin:0 0;">и фильтр</div>
<svg style="left:1617.9px;top:680px;" width="5" height="3" viewBox="0 0 5 3"><path d="M0 0H5L2.5 3Z" fill="#3b5a8c"/></svg>
<svg style="left:1643.5px;top:627.7px;" width="28" height="25" viewBox="0 0 28 25"><rect x="2" y="3" width="7" height="6" rx="1.5" fill="#6d8cc8"/><rect x="18" y="3" width="7" height="6" rx="1.5" fill="#6d8cc8"/><rect x="0" y="9" width="11" height="15" rx="2.5" fill="#4a6cb8"/><rect x="16" y="9" width="11" height="15" rx="2.5" fill="#4a6cb8"/><rect x="10" y="10" width="7" height="6" fill="#3a5aa8"/><rect x="1.5" y="11" width="3" height="10" fill="#a9c0ea"/><rect x="17.5" y="11" width="3" height="10" fill="#a9c0ea"/></svg>
<div class="t" style="left:1637.3px;top:661.4px;font-size:12px;line-height:12px;color:#15428b;font-weight:normal;transform:scaleX(0.9553);transform-origin:0 0;">Найти и</div>
<div class="t" style="left:1630px;top:675.0px;font-size:12px;line-height:12px;color:#15428b;font-weight:normal;transform:scaleX(0.9305);transform-origin:0 0;">выделить</div>
<svg style="left:1683px;top:680px;" width="5" height="3" viewBox="0 0 5 3"><path d="M0 0H5L2.5 3Z" fill="#3b5a8c"/></svg>
<div class="a" style="left:164px;top:706.5px;width:1712px;height:30px;background:#c5d8ef;"></div>
<div class="a" style="left:165px;top:706.5px;width:1710px;height:1px;background:#d9f1fb;"></div>
<div class="a" style="left:165px;top:711px;width:157.5px;height:20.5px;background:#ffffff;border:1px solid #a9c2e3"></div>
<div class="t" style="left:226.25px;top:715.4px;font-size:12px;line-height:12px;color:#111;font-weight:normal;transform:scaleX(1.0219);transform-origin:0 0;">A1</div>
<svg style="left:309.6px;top:719.4px;" width="7" height="4" viewBox="0 0 7 4"><path d="M0 0H7L3.5 4Z" fill="#111"/></svg>
<div class="a" style="left:323.5px;top:711px;width:84px;height:20px;background:linear-gradient(#edf3fa,#cddcef);border:1px solid #9fb9dd;border-radius:10px 0 0 10px"></div>
<svg style="left:328.7px;top:717.3px;" width="8" height="8" viewBox="0 0 8 8"><circle cx="4" cy="4" r="3.5" fill="#b9bec6" stroke="#9aa2ae" stroke-width="0.7"/></svg>
<div class="t" style="left:388px;top:715.0px;font-size:13px;line-height:13px;color:#555;font-weight:bold;font-style:italic;font-family:'Liberation Serif';transform:scaleX(1.1548);transform-origin:0 0;">f</div>
<div class="t" style="left:393.5px;top:718.5px;font-size:10px;line-height:10px;color:#555;font-weight:normal;font-style:italic;font-family:'Liberation Serif';transform:scaleX(1.2000);transform-origin:0 0;">x</div>
<div class="a" style="left:406.5px;top:711px;width:1455px;height:20.5px;background:#ffffff;border:1px solid #a9c2e3"></div>
<div class="t" style="left:415.2px;top:715.4px;font-size:12px;line-height:12px;color:#111;font-weight:normal;transform:scaleX(0.9945);transform-origin:0 0;">ORDERNO</div>
<div class="a" style="left:1861.9px;top:711.5px;width:14px;height:19px;background:linear-gradient(#f2f6fb,#cddcf0);border:1px solid #8fa9cf"></div>
<svg style="left:1864.5px;top:715px;" width="9" height="10" viewBox="0 0 9 10"><path d="M1 1L4.5 4L8 1M1 5.5L4.5 8.5L8 5.5" fill="none" stroke="#111" stroke-width="1.4"/></svg>
<div class="a" style="left:165px;top:731px;width:1696px;height:1px;background:#8fb0d8;"></div>
<div class="a" style="left:164px;top:731.5px;width:1697px;height:3.5px;background:#dfe9f6;"></div>
<div class="a" style="left:164px;top:735px;width:1697px;height:1px;background:#9db8dc;"></div>
<div class="a" style="left:164px;top:736px;width:1697px;height:280px;background:#ffffff;"></div>
<div class="a" style="left:189px;top:735px;width:1672px;height:280px;overflow:hidden">
<div class="a" style="left:90px;top:20px;width:1px;height:260px;background:#d0d7e5"></div><div class="a" style="left:185px;top:20px;width:1px;height:260px;background:#d0d7e5"></div><div class="a" style="left:325px;top:20px;width:1px;height:260px;background:#d0d7e5"></div><div class="a" style="left:415px;top:20px;width:1px;height:260px;background:#d0d7e5"></div><div class="a" style="left:530px;top:20px;width:1px;height:260px;background:#d0d7e5"></div><div class="a" style="left:675px;top:20px;width:1px;height:260px;background:#d0d7e5"></div><div class="a" style="left:835px;top:20px;width:1px;height:260px;background:#d0d7e5"></div><div class="a" style="left:945px;top:20px;width:1px;height:260px;background:#d0d7e5"></div><div class="a" style="left:1050px;top:20px;width:1px;height:260px;background:#d0d7e5"></div><div class="a" style="left:1165px;top:20px;width:1px;height:260px;background:#d0d7e5"></div><div class="a" style="left:1290px;top:20px;width:1px;height:260px;background:#d0d7e5"></div><div class="a" style="left:1370px;top:20px;width:1px;height:260px;background:#d0d7e5"></div><div class="a" style="left:1450px;top:20px;width:1px;height:260px;background:#d0d7e5"></div><div class="a" style="left:1514px;top:20px;width:1px;height:260px;background:#d0d7e5"></div><div class="a" style="left:1578px;top:20px;width:1px;height:260px;background:#d0d7e5"></div><div class="a" style="left:1642px;top:20px;width:1px;height:260px;background:#d0d7e5"></div><div class="a" style="left:1706px;top:20px;width:1px;height:260px;background:#d0d7e5"></div><div class="a" style="left:0;top:40px;width:1672px;height:1px;background:#d0d7e5"></div><div class="a" style="left:0;top:60px;width:1672px;height:1px;background:#d0d7e5"></div><div class="a" style="left:0;top:80px;width:1672px;height:1px;background:#d0d7e5"></div><div class="a" style="left:0;top:100px;width:1672px;height:1px;background:#d0d7e5"></div><div class="a" style="left:0;top:120px;width:1672px;height:1px;background:#d0d7e5"></div><div class="a" style="left:0;top:140px;width:1672px;height:1px;background:#d0d7e5"></div><div class="a" style="left:0;top:160px;width:1672px;height:1px;background:#d0d7e5"></div><div class="a" style="left:0;top:180px;width:1672px;height:1px;background:#d0d7e5"></div><div class="a" style="left:0;top:200px;width:1672px;height:1px;background:#d0d7e5"></div><div class="a" style="left:0;top:220px;width:1672px;height:1px;background:#d0d7e5"></div><div class="a" style="left:0;top:240px;width:1672px;height:1px;background:#d0d7e5"></div><div class="a" style="left:0;top:260px;width:1672px;height:1px;background:#d0d7e5"></div><div class="a" style="left:0;top:280px;width:1672px;height:1px;background:#d0d7e5"></div>
</div>
<div class="a" style="left:164px;top:736px;width:1697px;height:20px;overflow:hidden">
<div class="a" style="left:0;top:0;width:26px;height:20px;background:linear-gradient(#c9d9ee,#b7cbe6);border-right:1px solid #9eb6ce;border-bottom:1px solid #9eb6ce"></div><div class="a" style="left:26px;top:0;width:90px;height:20px;background:linear-gradient(#f9e3ae,#f2c870 60%,#f1c15f);border-right:1px solid #9eb6ce;border-bottom:1px solid #f29436"></div><div class="a" style="left:116px;top:0;width:95px;height:20px;background:linear-gradient(#f9fcfd,#e9eef6 55%,#dee6f1);border-right:1px solid #9eb6ce;border-bottom:1px solid #9eb6ce"></div><div class="a" style="left:211px;top:0;width:140px;height:20px;background:linear-gradient(#f9fcfd,#e9eef6 55%,#dee6f1);border-right:1px solid #9eb6ce;border-bottom:1px solid #9eb6ce"></div><div class="a" style="left:351px;top:0;width:90px;height:20px;background:linear-gradient(#f9fcfd,#e9eef6 55%,#dee6f1);border-right:1px solid #9eb6ce;border-bottom:1px solid #9eb6ce"></div><div class="a" style="left:441px;top:0;width:115px;height:20px;background:linear-gradient(#f9fcfd,#e9eef6 55%,#dee6f1);border-right:1px solid #9eb6ce;border-bottom:1px solid #9eb6ce"></div><div class="a" style="left:556px;top:0;width:145px;height:20px;background:linear-gradient(#f9fcfd,#e9eef6 55%,#dee6f1);border-right:1px solid #9eb6ce;border-bottom:1px solid #9eb6ce"></div><div class="a" style="left:701px;top:0;width:160px;height:20px;background:linear-gradient(#f9fcfd,#e9eef6 55%,#dee6f1);border-right:1px solid #9eb6ce;border-bottom:1px solid #9eb6ce"></div><div class="a" style="left:861px;top:0;width:110px;height:20px;background:linear-gradient(#f9fcfd,#e9eef6 55%,#dee6f1);border-right:1px solid #9eb6ce;border-bottom:1px solid #9eb6ce"></div><div class="a" style="left:971px;top:0;width:105px;height:20px;background:linear-gradient(#f9fcfd,#e9eef6 55%,#dee6f1);border-right:1px solid #9eb6ce;border-bottom:1px solid #9eb6ce"></div><div class="a" style="left:1076px;top:0;width:115px;height:20px;background:linear-gradient(#f9fcfd,#e9eef6 55%,#dee6f1);border-right:1px solid #9eb6ce;border-bottom:1px solid #9eb6ce"></div><div class="a" style="left:1191px;top:0;width:125px;height:20px;background:linear-gradient(#f9fcfd,#e9eef6 55%,#dee6f1);border-right:1px solid #9eb6ce;border-bottom:1px solid #9eb6ce"></div><div class="a" style="left:1316px;top:0;width:80px;height:20px;background:linear-gradient(#f9fcfd,#e9eef6 55%,#dee6f1);border-right:1px solid #9eb6ce;border-bottom:1px solid #9eb6ce"></div><div class="a" style="left:1396px;top:0;width:80px;height:20px;background:linear-gradient(#f9fcfd,#e9eef6 55%,#dee6f1);border-right:1px solid #9eb6ce;border-bottom:1px solid #9eb6ce"></div><div class="a" style="left:1476px;top:0;width:64px;height:20px;background:linear-gradient(#f9fcfd,#e9eef6 55%,#dee6f1);border-right:1px solid #9eb6ce;border-bottom:1px solid #9eb6ce"></div><div class="a" style="left:1540px;top:0;width:64px;height:20px;background:linear-gradient(#f9fcfd,#e9eef6 55%,#dee6f1);border-right:1px solid #9eb6ce;border-bottom:1px solid #9eb6ce"></div><div class="a" style="left:1604px;top:0;width:64px;height:20px;background:linear-gradient(#f9fcfd,#e9eef6 55%,#dee6f1);border-right:1px solid #9eb6ce;border-bottom:1px solid #9eb6ce"></div><div class="a" style="left:1668px;top:0;width:64px;height:20px;background:linear-gradient(#f9fcfd,#e9eef6 55%,#dee6f1);border-right:1px solid #9eb6ce;border-bottom:1px solid #9eb6ce"></div>
</div>
<svg style="left:175px;top:740px;" width="11" height="11" viewBox="0 0 11 11"><path d="M11 0V11H0Z" fill="#f4f7fb"/></svg>
<div class="t" style="left:214px;top:740px;width:40px;text-align:center;font-size:12.5px;line-height:13px;color:#27415f">A</div>
<div class="t" style="left:306.5px;top:740px;width:40px;text-align:center;font-size:12.5px;line-height:13px;color:#27415f">B</div>
<div class="t" style="left:424px;top:740px;width:40px;text-align:center;font-size:12.5px;line-height:13px;color:#27415f">C</div>
<div class="t" style="left:539px;top:740px;width:40px;text-align:center;font-size:12.5px;line-height:13px;color:#27415f">D</div>
<div class="t" style="left:641.5px;top:740px;width:40px;text-align:center;font-size:12.5px;line-height:13px;color:#27415f">E</div>
<div class="t" style="left:771.5px;top:740px;width:40px;text-align:center;font-size:12.5px;line-height:13px;color:#27415f">F</div>
<div class="t" style="left:924px;top:740px;width:40px;text-align:center;font-size:12.5px;line-height:13px;color:#27415f">G</div>
<div class="t" style="left:1059px;top:740px;width:40px;text-align:center;font-size:12.5px;line-height:13px;color:#27415f">H</div>
<div class="t" style="left:1166.5px;top:740px;width:40px;text-align:center;font-size:12.5px;line-height:13px;color:#27415f">I</div>
<div class="t" style="left:1276.5px;top:740px;width:40px;text-align:center;font-size:12.5px;line-height:13px;color:#27415f">J</div>
<div class="t" style="left:1396.5px;top:740px;width:40px;text-align:center;font-size:12.5px;line-height:13px;color:#27415f">K</div>
<div class="t" style="left:1499px;top:740px;width:40px;text-align:center;font-size:12.5px;line-height:13px;color:#27415f">L</div>
<div class="t" style="left:1579px;top:740px;width:40px;text-align:center;font-size:12.5px;line-height:13px;color:#27415f">M</div>
<div class="t" style="left:1651px;top:740px;width:40px;text-align:center;font-size:12.5px;line-height:13px;color:#27415f">N</div>
<div class="t" style="left:1715px;top:740px;width:40px;text-align:center;font-size:12.5px;line-height:13px;color:#27415f">O</div>
<div class="t" style="left:1779px;top:740px;width:40px;text-align:center;font-size:12.5px;line-height:13px;color:#27415f">P</div>
<div class="t" style="left:1843px;top:740px;width:40px;text-align:center;font-size:12.5px;line-height:13px;color:#27415f">Q</div>
<div class="a" style="left:164px;top:756px;width:26px;height:20px;background:linear-gradient(90deg,#f9d99f,#f1c15f);border-right:1px solid #f29436;border-bottom:1px solid #9eb6ce"></div>
<div class="t" style="left:164px;top:760.5px;width:25px;text-align:center;font-size:12.5px;line-height:13px;color:#27415f">1</div>
<div class="a" style="left:164px;top:776px;width:26px;height:20px;background:#e4ecf7;border-right:1px solid #9eb6ce;border-bottom:1px solid #9eb6ce"></div>
<div class="t" style="left:164px;top:780.5px;width:25px;text-align:center;font-size:12.5px;line-height:13px;color:#27415f">2</div>
<div class="a" style="left:164px;top:796px;width:26px;height:20px;background:#e4ecf7;border-right:1px solid #9eb6ce;border-bottom:1px solid #9eb6ce"></div>
<div class="t" style="left:164px;top:800.5px;width:25px;text-align:center;font-size:12.5px;line-height:13px;color:#27415f">3</div>
<div class="a" style="left:164px;top:816px;width:26px;height:20px;background:#e4ecf7;border-right:1px solid #9eb6ce;border-bottom:1px solid #9eb6ce"></div>
<div class="t" style="left:164px;top:820.5px;width:25px;text-align:center;font-size:12.5px;line-height:13px;color:#27415f">4</div>
<div class="a" style="left:164px;top:836px;width:26px;height:20px;background:#e4ecf7;border-right:1px solid #9eb6ce;border-bottom:1px solid #9eb6ce"></div>
<div class="t" style="left:164px;top:840.5px;width:25px;text-align:center;font-size:12.5px;line-height:13px;color:#27415f">5</div>
<div class="a" style="left:164px;top:856px;width:26px;height:20px;background:#e4ecf7;border-right:1px solid #9eb6ce;border-bottom:1px solid #9eb6ce"></div>
<div class="t" style="left:164px;top:860.5px;width:25px;text-align:center;font-size:12.5px;line-height:13px;color:#27415f">6</div>
<div class="a" style="left:164px;top:876px;width:26px;height:20px;background:#e4ecf7;border-right:1px solid #9eb6ce;border-bottom:1px solid #9eb6ce"></div>
<div class="t" style="left:164px;top:880.5px;width:25px;text-align:center;font-size:12.5px;line-height:13px;color:#27415f">7</div>
<div class="a" style="left:164px;top:896px;width:26px;height:20px;background:#e4ecf7;border-right:1px solid #9eb6ce;border-bottom:1px solid #9eb6ce"></div>
<div class="t" style="left:164px;top:900.5px;width:25px;text-align:center;font-size:12.5px;line-height:13px;color:#27415f">8</div>
<div class="a" style="left:164px;top:916px;width:26px;height:20px;background:#e4ecf7;border-right:1px solid #9eb6ce;border-bottom:1px solid #9eb6ce"></div>
<div class="t" style="left:164px;top:920.5px;width:25px;text-align:center;font-size:12.5px;line-height:13px;color:#27415f">9</div>
<div class="a" style="left:164px;top:936px;width:26px;height:20px;background:#e4ecf7;border-right:1px solid #9eb6ce;border-bottom:1px solid #9eb6ce"></div>
<div class="t" style="left:164px;top:940.5px;width:25px;text-align:center;font-size:12.5px;line-height:13px;color:#27415f">10</div>
<div class="a" style="left:164px;top:956px;width:26px;height:20px;background:#e4ecf7;border-right:1px solid #9eb6ce;border-bottom:1px solid #9eb6ce"></div>
<div class="t" style="left:164px;top:960.5px;width:25px;text-align:center;font-size:12.5px;line-height:13px;color:#27415f">11</div>
<div class="a" style="left:164px;top:976px;width:26px;height:20px;background:#e4ecf7;border-right:1px solid #9eb6ce;border-bottom:1px solid #9eb6ce"></div>
<div class="t" style="left:164px;top:980.5px;width:25px;text-align:center;font-size:12.5px;line-height:13px;color:#27415f">12</div>
<div class="a" style="left:164px;top:996px;width:26px;height:20px;background:#e4ecf7;border-right:1px solid #9eb6ce;border-bottom:1px solid #9eb6ce"></div>
<div class="t" style="left:164px;top:1000.5px;width:25px;text-align:center;font-size:12.5px;line-height:13px;color:#27415f">13</div>
<div class="t" style="left:192px;top:761.1px;font-size:12px;line-height:12px;color:#000;font-weight:bold;transform:scaleX(1.0067);transform-origin:0 0;">ORDERNO</div>
<div class="a" style="left:262.5px;top:757.5px;width:16px;height:16.5px;background:linear-gradient(#f8f9fb,#dfe3ea);border:1px solid #8a98ad;border-radius:2px"></div>
<svg style="left:267.5px;top:764px;" width="6" height="3.5" viewBox="0 0 6 3.5"><path d="M0 0H6L3 3.5Z" fill="#2b3f80"/></svg>
<div class="t" style="left:282.5px;top:761.1px;font-size:12px;line-height:12px;color:#000;font-weight:bold;transform:scaleX(1.0796);transform-origin:0 0;">INTITEMNO</div>
<div class="a" style="left:357.5px;top:757.5px;width:16px;height:16.5px;background:linear-gradient(#f8f9fb,#dfe3ea);border:1px solid #8a98ad;border-radius:2px"></div>
<svg style="left:362.5px;top:764px;" width="6" height="3.5" viewBox="0 0 6 3.5"><path d="M0 0H6L3 3.5Z" fill="#2b3f80"/></svg>
<div class="t" style="left:377px;top:761.1px;font-size:12px;line-height:12px;color:#000;font-weight:bold;transform:scaleX(1.0164);transform-origin:0 0;">PRODUCTID</div>
<div class="a" style="left:497.5px;top:757.5px;width:16px;height:16.5px;background:linear-gradient(#f8f9fb,#dfe3ea);border:1px solid #8a98ad;border-radius:2px"></div>
<svg style="left:502.5px;top:764px;" width="6" height="3.5" viewBox="0 0 6 3.5"><path d="M0 0H6L3 3.5Z" fill="#2b3f80"/></svg>
<div class="t" style="left:517px;top:761.1px;font-size:12px;line-height:12px;color:#000;font-weight:bold;transform:scaleX(1.0598);transform-origin:0 0;">QUANTITY</div>
<div class="a" style="left:587.5px;top:757.5px;width:16px;height:16.5px;background:linear-gradient(#f8f9fb,#dfe3ea);border:1px solid #8a98ad;border-radius:2px"></div>
<svg style="left:592.5px;top:764px;" width="6" height="3.5" viewBox="0 0 6 3.5"><path d="M0 0H6L3 3.5Z" fill="#2b3f80"/></svg>
<div class="t" style="left:607px;top:761.1px;font-size:12px;line-height:12px;color:#000;font-weight:bold;transform:scaleX(1.0410);transform-origin:0 0;">CUSTOMERNO</div>
<div class="a" style="left:702.5px;top:757.5px;width:16px;height:16.5px;background:linear-gradient(#f8f9fb,#dfe3ea);border:1px solid #8a98ad;border-radius:2px"></div>
<svg style="left:707.5px;top:764px;" width="6" height="3.5" viewBox="0 0 6 3.5"><path d="M0 0H6L3 3.5Z" fill="#2b3f80"/></svg>
<div class="t" style="left:722px;top:761.1px;font-size:12px;line-height:12px;color:#000;font-weight:bold;transform:scaleX(1.0494);transform-origin:0 0;">SHIPPING_METHOD</div>
<div class="a" style="left:847.5px;top:757.5px;width:16px;height:16.5px;background:linear-gradient(#f8f9fb,#dfe3ea);border:1px solid #8a98ad;border-radius:2px"></div>
<svg style="left:852.5px;top:764px;" width="6" height="3.5" viewBox="0 0 6 3.5"><path d="M0 0H6L3 3.5Z" fill="#2b3f80"/></svg>
<div class="t" style="left:867px;top:761.1px;font-size:12px;line-height:12px;color:#000;font-weight:bold;transform:scaleX(1.0121);transform-origin:0 0;">SHIP_TO</div>
<div class="a" style="left:1007px;top:757.5px;width:16px;height:16.5px;background:linear-gradient(#f8f9fb,#dfe3ea);border:1px solid #8a98ad;border-radius:2px"></div>
<svg style="left:1012px;top:764px;" width="6" height="3.5" viewBox="0 0 6 3.5"><path d="M0 0H6L3 3.5Z" fill="#2b3f80"/></svg>
<div class="t" style="left:1027px;top:761.1px;font-size:12px;line-height:12px;color:#000;font-weight:bold;transform:scaleX(0.9843);transform-origin:0 0;">REFORDERNO</div>
<div class="a" style="left:1117.5px;top:757.5px;width:16px;height:16.5px;background:linear-gradient(#f8f9fb,#dfe3ea);border:1px solid #8a98ad;border-radius:2px"></div>
<svg style="left:1122.5px;top:764px;" width="6" height="3.5" viewBox="0 0 6 3.5"><path d="M0 0H6L3 3.5Z" fill="#2b3f80"/></svg>
<div class="t" style="left:1137px;top:761.1px;font-size:12px;line-height:12px;color:#000;font-weight:bold;transform:scaleX(0.9843);transform-origin:0 0;">ORDER_DATE</div>
<div class="a" style="left:1222.5px;top:757.5px;width:16px;height:16.5px;background:linear-gradient(#f8f9fb,#dfe3ea);border:1px solid #8a98ad;border-radius:2px"></div>
<svg style="left:1227.5px;top:764px;" width="6" height="3.5" viewBox="0 0 6 3.5"><path d="M0 0H6L3 3.5Z" fill="#2b3f80"/></svg>
<div class="t" style="left:1242px;top:761.1px;font-size:12px;line-height:12px;color:#000;font-weight:bold;transform:scaleX(1.0199);transform-origin:0 0;">CUSTOMERPO</div>
<div class="a" style="left:1337px;top:757.5px;width:16px;height:16.5px;background:linear-gradient(#f8f9fb,#dfe3ea);border:1px solid #8a98ad;border-radius:2px"></div>
<svg style="left:1342px;top:764px;" width="6" height="3.5" viewBox="0 0 6 3.5"><path d="M0 0H6L3 3.5Z" fill="#2b3f80"/></svg>
<div class="t" style="left:1357px;top:761.1px;font-size:12px;line-height:12px;color:#000;font-weight:bold;transform:scaleX(0.9913);transform-origin:0 0;">USER_DEFINED1</div>
<div class="a" style="left:1462px;top:757.5px;width:16px;height:16.5px;background:linear-gradient(#f8f9fb,#dfe3ea);border:1px solid #8a98ad;border-radius:2px"></div>
<svg style="left:1467px;top:764px;" width="6" height="3.5" viewBox="0 0 6 3.5"><path d="M0 0H6L3 3.5Z" fill="#2b3f80"/></svg>
<div class="t" style="left:1482px;top:761.1px;font-size:12px;line-height:12px;color:#000;font-weight:bold;transform:scaleX(1.1519);transform-origin:0 0;">UOM</div>
<div class="a" style="left:1542px;top:757.5px;width:16px;height:16.5px;background:linear-gradient(#f8f9fb,#dfe3ea);border:1px solid #8a98ad;border-radius:2px"></div>
<svg style="left:1547px;top:764px;" width="6" height="3.5" viewBox="0 0 6 3.5"><path d="M0 0H6L3 3.5Z" fill="#2b3f80"/></svg>
<div class="t" style="left:1562.7px;top:761.1px;font-size:12px;line-height:12px;color:#000;font-weight:bold;transform:scaleX(1.0443);transform-origin:0 0;">DSTUOM</div>
<div class="a" style="left:1622.6px;top:757.5px;width:16px;height:16.5px;background:linear-gradient(#f8f9fb,#dfe3ea);border:1px solid #8a98ad;border-radius:2px"></div>
<svg style="left:1627.6px;top:764px;" width="6" height="3.5" viewBox="0 0 6 3.5"><path d="M0 0H6L3 3.5Z" fill="#2b3f80"/></svg>
<div class="a" style="left:190px;top:775px;width:1671px;height:1px;background:#444444;"></div>
<div class="t" style="left:192px;top:781.1px;font-size:12px;line-height:12px;color:#000;font-weight:normal;transform:scaleX(0.9978);transform-origin:0 0;">SLS0000192</div>
<div class="t" style="left:367px;top:781.1px;font-size:12px;line-height:12px;color:#000;font-weight:normal;transform:scaleX(0.7492);transform-origin:0 0;">1</div>
<div class="t" style="left:377px;top:781.1px;font-size:12px;line-height:12px;color:#000;font-weight:normal;transform:scaleX(1.0488);transform-origin:0 0;">05678</div>
<div class="t" style="left:597px;top:781.1px;font-size:12px;line-height:12px;color:#000;font-weight:normal;transform:scaleX(0.7492);transform-origin:0 0;">5</div>
<div class="t" style="left:607px;top:781.1px;font-size:12px;line-height:12px;color:#000;font-weight:normal;transform:scaleX(0.8817);transform-origin:0 0;">SLS</div>
<div class="t" style="left:1027px;top:781.1px;font-size:12px;line-height:12px;color:#000;font-weight:normal;transform:scaleX(0.9870);transform-origin:0 0;">SLS0000192</div>
<div class="a" style="left:189px;top:755px;width:92px;height:22px;background:transparent;border:2px solid #000"></div>
<div class="a" style="left:277.5px;top:774px;width:5px;height:5px;background:#000;border:1px solid #fff"></div>
<div class="a" style="left:1634.5px;top:810.5px;width:3px;height:3px;background:#2b48a8;"></div>
<div class="a" style="left:1636.5px;top:808.5px;width:1.5px;height:3px;background:#2b48a8;"></div>
<div class="a" style="left:1861px;top:735.5px;width:15.5px;height:276px;background:linear-gradient(90deg,#9bb6dc,#7b9cc8 25%,#7b9cc8);"></div>
<svg style="left:1864px;top:743px;" width="9" height="6" viewBox="0 0 9 6"><path d="M0.5 5.5L4.5 1L8.5 5.5Z" fill="#3d5a8a"/></svg>
<div class="a" style="left:1862.5px;top:753.7px;width:13.3px;height:137.3px;background:linear-gradient(90deg,#f1f5fb,#d5e1f1 60%,#c3d3ea);border:1px solid #8aa6cf;border-radius:2px"></div>
<div class="a" style="left:1866px;top:818.5px;width:7px;height:1px;background:#7a93b8;"></div>
<div class="a" style="left:1866px;top:820.5px;width:7px;height:1px;background:#7a93b8;"></div>
<div class="a" style="left:1866px;top:822.5px;width:7px;height:1px;background:#7a93b8;"></div>
<div class="a" style="left:1866px;top:824.5px;width:7px;height:1px;background:#7a93b8;"></div>
<svg style="left:1865px;top:1000px;" width="9" height="6" viewBox="0 0 9 6"><path d="M0.5 0.5L4.5 5L8.5 0.5Z" fill="#3d4f80"/></svg>
<div class="a" style="left:164px;top:1011px;width:1697px;height:16px;background:#a3bde3;"></div>
<div class="a" style="left:164px;top:1011px;width:1020px;height:16px;background:linear-gradient(#a9c2e6,#98b4de);"></div>
<div class="a" style="left:164px;top:1011px;width:1697px;height:1px;background:#7f9cc6;"></div>
<div class="a" style="left:164px;top:1011px;width:62px;height:16px;background:linear-gradient(#e1ecfa,#c3d8f3 55%,#b5cdef);border-top:1px solid #7f9cc6;border-right:1px solid #7f9cc6"></div>
<svg style="left:168.75px;top:1015px;" width="10" height="9" viewBox="0 0 10 9"><rect x="0.5" y="0.5" width="1.5" height="8" fill="#15428b"/><path d="M8 0.5V8.5L3 4.5Z" fill="#15428b"/></svg>
<svg style="left:184px;top:1015px;" width="10" height="9" viewBox="0 0 10 9"><path d="M7 0.5V8.5L2 4.5Z" fill="#15428b"/></svg>
<svg style="left:198px;top:1015px;" width="10" height="9" viewBox="0 0 10 9"><path d="M2 0.5V8.5L7 4.5Z" fill="#15428b"/></svg>
<svg style="left:212px;top:1015px;" width="10" height="9" viewBox="0 0 10 9"><path d="M1 0.5V8.5L6 4.5Z" fill="#15428b"/><rect x="7" y="0.5" width="1.5" height="8" fill="#15428b"/></svg>
<svg style="left:226px;top:1011.5px;" width="92" height="16" viewBox="0 0 92 16"><path d="M0 0H86L92 15.5H4Z" fill="#ffffff" stroke="#7f9cc6" stroke-width="0.8"/></svg>
<div class="t" style="left:236.25px;top:1013.2px;font-size:12.5px;line-height:12.5px;color:#15428b;font-weight:bold;transform:scaleX(1.0274);transform-origin:0 0;">SLT Report</div>
<svg style="left:310px;top:1012px;" width="45" height="15" viewBox="0 0 45 15"><path d="M6 0H38L45 15H2Z" fill="#c9daf2" stroke="#7f9cc6" stroke-width="0.8"/></svg>
<svg style="left:322px;top:1013px;" width="13" height="12" viewBox="0 0 13 12"><circle cx="3" cy="3" r="2.5" fill="#f5b400"/><rect x="4" y="4" width="8.5" height="7" rx="1" fill="#fff" stroke="#6c7c98" stroke-width="0.9"/></svg>
<div class="a" style="left:1182.5px;top:1012.5px;width:7px;height:13px;background:#ffffff;border:1px solid #6f8fbf"></div>
<div class="a" style="left:1189.5px;top:1012px;width:671.5px;height:15px;background:linear-gradient(#9ab4da,#7897c3 30%,#7897c3);"></div>
<svg style="left:1195px;top:1015px;" width="6" height="9" viewBox="0 0 6 9"><path d="M5.5 0.5V8.5L0.5 4.5Z" fill="#2d4a80"/></svg>
<div class="a" style="left:1207.5px;top:1012.5px;width:556px;height:13.5px;background:linear-gradient(#f5f8fc,#dfe7f2 50%,#c3d2e8);border:1px solid #8aa6cf;border-radius:2px"></div>
<div class="a" style="left:1481px;top:1017px;width:1px;height:6px;background:#6d85ab;"></div>
<div class="a" style="left:1483px;top:1017px;width:1px;height:6px;background:#6d85ab;"></div>
<div class="a" style="left:1485px;top:1017px;width:1px;height:6px;background:#6d85ab;"></div>
<div class="a" style="left:1487px;top:1017px;width:1px;height:6px;background:#6d85ab;"></div>
<svg style="left:1851px;top:1015px;" width="6" height="9" viewBox="0 0 6 9"><path d="M0.5 0.5V8.5L5.5 4.5Z" fill="#2d4a80"/></svg>
<div class="a" style="left:1861px;top:1011.5px;width:15.5px;height:15.5px;background:#779dd2;"></div>
<div class="a" style="left:164px;top:1027px;width:1712px;height:13px;background:linear-gradient(#dce9fb,#c4d9f5 50%,#b3cdf0);"></div>
<div class="a" style="left:164px;top:1027px;width:1712px;height:1.5px;background:#6e90c2;"></div>
<div class="t" style="left:171.25px;top:1031.8px;font-size:12px;line-height:12px;color:#1e395b;font-weight:normal;transform:scaleX(0.9783);transform-origin:0 0;">Готово</div>
<div class="a" style="left:217px;top:1028px;width:1px;height:12px;background:#a3bde3;"></div>
<div class="a" style="left:1623px;top:1028px;width:55px;height:12px;background:linear-gradient(#e8f0fb,#c9daf2);"></div>
<div class="a" style="left:1623px;top:1028px;width:19px;height:12px;background:linear-gradient(#fde7a8,#fbbd4e);"></div>
<svg style="left:1627px;top:1031px;" width="13" height="9" viewBox="0 0 13 9"><rect x="0.5" y="0.5" width="12" height="9" fill="none" stroke="#333" stroke-width="0.9"/><path d="M0.5 3.5H12.5M0.5 6.5H12.5M4.5 0.5V9.5M8.5 0.5V9.5" stroke="#333" stroke-width="0.8"/></svg>
<svg style="left:1646px;top:1031px;" width="12" height="9" viewBox="0 0 12 9"><rect x="0.5" y="0.5" width="11" height="9" fill="none" stroke="#555" stroke-width="0.9"/><rect x="2.5" y="2.5" width="7" height="7" fill="none" stroke="#555" stroke-width="0.8"/></svg>
<svg style="left:1664px;top:1031px;" width="12" height="9" viewBox="0 0 12 9"><rect x="0.5" y="0.5" width="11" height="9" fill="none" stroke="#555" stroke-width="0.9"/><path d="M4 0.5V9.5M8 0.5V9.5" stroke="#555" stroke-width="1.5"/></svg>
<div class="t" style="left:1688px;top:1031.3px;font-size:11.5px;line-height:11.5px;color:#1e395b;font-weight:normal;transform:scaleX(0.8840);transform-origin:0 0;">100%</div>
<svg style="left:1723.7px;top:1029px;" width="15" height="15" viewBox="0 0 15 15"><circle cx="7.5" cy="7.5" r="7" fill="#eef3fb" stroke="#4f6d9c" stroke-width="1"/><rect x="3.5" y="6.8" width="8" height="1.8" fill="#2d4a80"/></svg>
<div class="a" style="left:1739px;top:1035px;width:102px;height:1px;background:#7f9cc6;"></div>
<div class="a" style="left:1785px;top:1029px;width:9px;height:11px;background:#ffffff;border:1px solid #6f8fbf;border-radius:1px"></div>
<svg style="left:1841px;top:1029px;" width="16" height="15" viewBox="0 0 16 15"><circle cx="8" cy="7.5" r="7" fill="#eef3fb" stroke="#4f6d9c" stroke-width="1"/><rect x="4" y="6.8" width="8" height="1.8" fill="#2d4a80"/><rect x="7.1" y="3.5" width="1.8" height="8" fill="#2d4a80"/></svg>
<div class="t" style="left:1599.3px;top:947.6px;font-size:20px;line-height:20px;color:rgba(120,120,120,0.42);font-weight:normal;transform:scaleX(0.9884);transform-origin:0 0;">Activate Windows</div>
<div class="t" style="left:1599.3px;top:973.5px;font-size:14.5px;line-height:14.5px;color:rgba(120,120,120,0.42);font-weight:normal;transform:scaleX(1.0267);transform-origin:0 0;">Go to Settings to activate Windows.</div>
</body></html>
